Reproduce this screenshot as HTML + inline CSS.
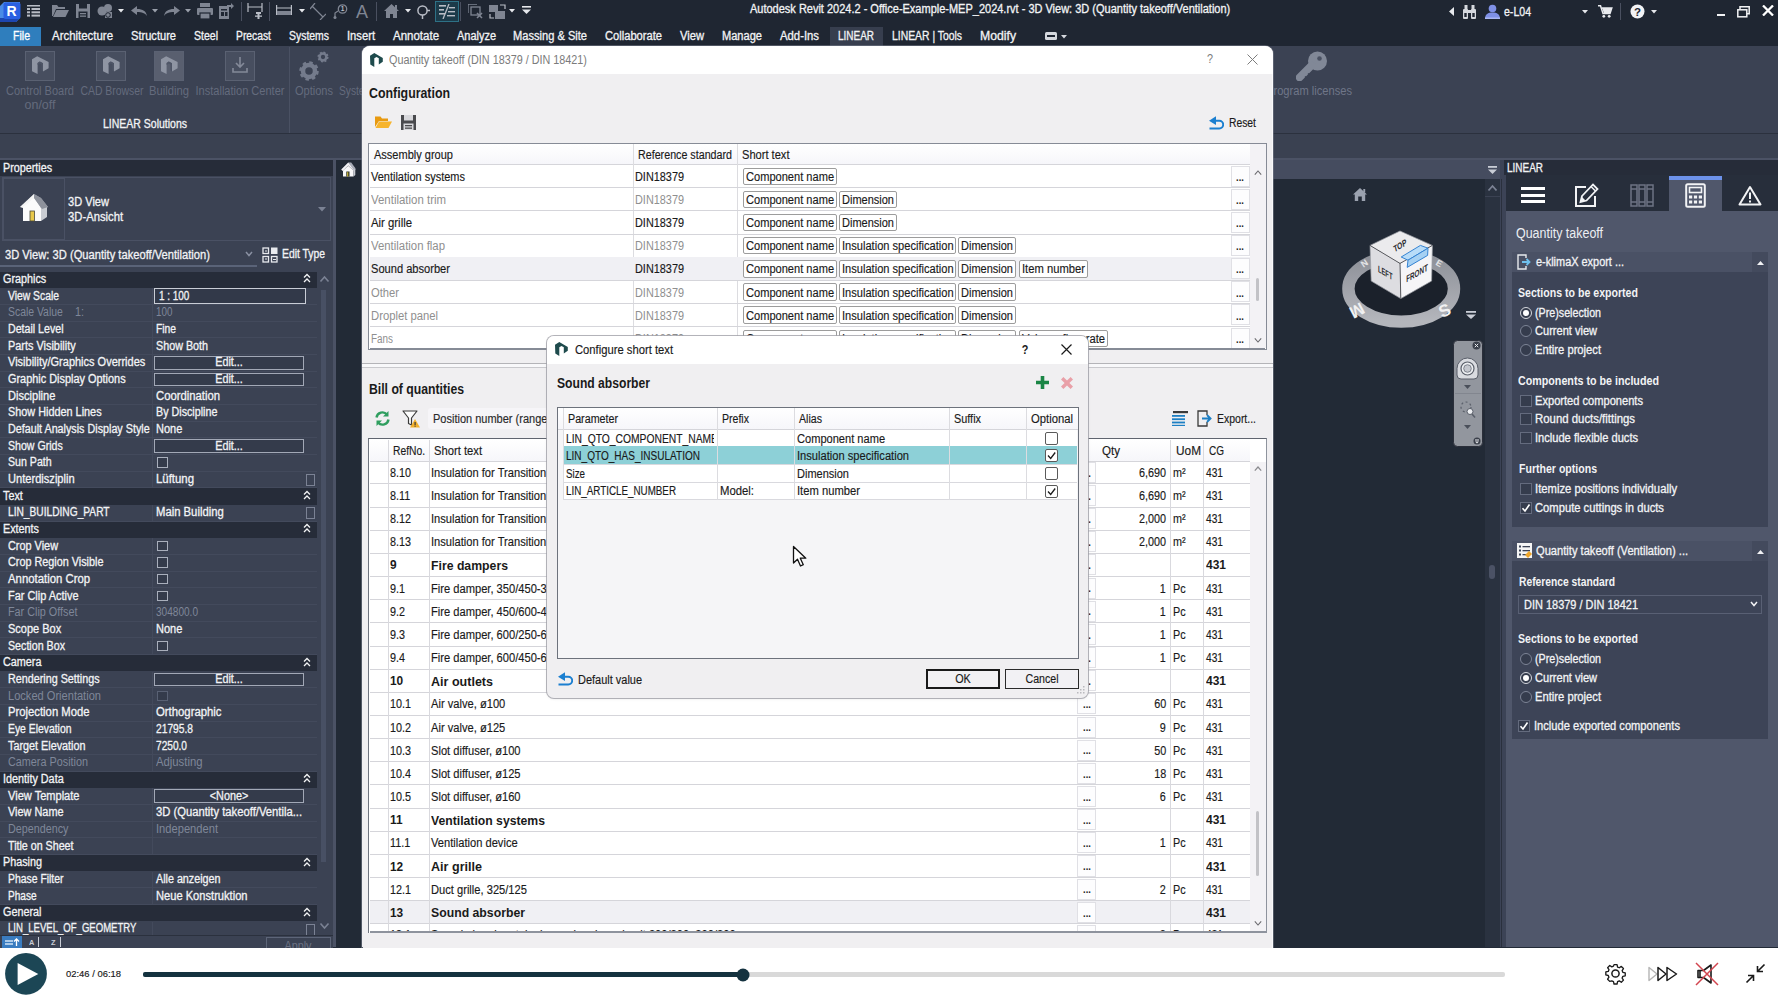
<!DOCTYPE html>
<html><head><meta charset="utf-8"><title>Revit - Quantity takeoff</title>
<style>
html,body{margin:0;padding:0;background:#222a37;}
body{width:1778px;height:1000px;overflow:hidden;position:relative;font-family:"Liberation Sans",sans-serif;}
.b{position:absolute;display:block;}
.t{position:absolute;white-space:nowrap;display:block;}
</style></head><body>
<div class="b" style="left:0px;top:0px;width:1778px;height:46px;background:#1f2632;"></div>
<div class="b" style="left:0px;top:45.5px;width:1778px;height:88.5px;background:#3b4253;"></div>
<div class="b" style="left:0px;top:133px;width:1778px;height:1px;background:#2b313e;"></div>
<div class="b" style="left:0px;top:134px;width:1778px;height:24px;background:#3a4151;"></div>
<div class="b" style="left:0px;top:158px;width:1778px;height:2px;background:#4b5265;"></div>
<svg class="b" style="left:0px;top:1px;" width="22" height="22" viewBox="0 0 22 22"><path d="M0 5 4 1H20V17l-4 4H0Z" fill="#4a8be6"/><path d="M0 17h16l4-4v4l-4 4H0Z" fill="#1d46b0"/><rect x="3.500" y="1.500" width="17" height="16.500" rx="2" fill="#2a60e2"/><text x="11.5" y="15" font-family="Liberation Sans" font-weight="bold" font-size="14" fill="#fff" text-anchor="middle">R</text></svg>
<svg class="b" style="left:27px;top:4px;" width="14" height="14" viewBox="0 0 14 14"><g fill="#b9bdc6"><rect x="0" y="1" width="13" height="1.5"/><rect x="0" y="4" width="3" height="2"/><rect x="4.5" y="4" width="8.5" height="2"/><rect x="0" y="7.3" width="3" height="2"/><rect x="4.5" y="7.3" width="8.5" height="2"/><rect x="0" y="10.6" width="3" height="2"/><rect x="4.5" y="10.6" width="8.5" height="2"/></g></svg>
<svg class="b" style="left:52px;top:4px;" width="17" height="14" viewBox="0 0 17 14"><path d="M0 1h5l1.5 2H13v2H4L1 12H0Z" fill="#7f8592"/><path d="M4.5 6H17l-3.5 7H1Z" fill="#7f8592"/></svg>
<svg class="b" style="left:76px;top:4px;" width="14" height="14" viewBox="0 0 14 14"><path d="M0 0h14v14H0Z" fill="#7f8592"/><rect x="3" y="0" width="8" height="4.5" fill="#1f2632"/><rect x="2.5" y="7.5" width="9" height="6.5" fill="#1f2632"/><rect x="4" y="9" width="6" height="1.3" fill="#7f8592"/><rect x="4" y="11.5" width="6" height="1.3" fill="#7f8592"/></svg>
<svg class="b" style="left:97px;top:3px;" width="17" height="16" viewBox="0 0 17 16"><circle cx="5" cy="8" r="4.5" fill="#7f8592"/><circle cx="11" cy="5" r="4" fill="#7f8592"/><path d="M8 9h7v6H8Z" fill="#7f8592"/><circle cx="11" cy="12" r="2.3" fill="none" stroke="#1f2632" stroke-width="1"/></svg>
<svg class="b" style="left:118px;top:9px;" width="6" height="4" viewBox="0 0 6 4"><path d="M0 0h6L3 3.5Z" fill="#e6e8ec"/></svg>
<svg class="b" style="left:131px;top:6px;" width="16" height="10" viewBox="0 0 16 10"><path d="M0 4.5 6 0v3c6 0 9 2 10 7-2-3-5-4-10-4v3Z" fill="#7f8592"/></svg>
<svg class="b" style="left:152px;top:9px;" width="6" height="4" viewBox="0 0 6 4"><path d="M0 0h6L3 3.5Z" fill="#9aa0ab"/></svg>
<svg class="b" style="left:164px;top:6px;" width="16" height="10" viewBox="0 0 16 10"><path d="M16 4.5 10 0v3C4 3 1 5 0 10c2-3 5-4 10-4v3Z" fill="#7f8592"/></svg>
<svg class="b" style="left:185px;top:9px;" width="6" height="4" viewBox="0 0 6 4"><path d="M0 0h6L3 3.5Z" fill="#9aa0ab"/></svg>
<svg class="b" style="left:197px;top:3px;" width="16" height="16" viewBox="0 0 16 16"><rect x="3" y="0" width="10" height="4" fill="#7f8592"/><rect x="0" y="5" width="16" height="7" rx="1" fill="#7f8592"/><rect x="3" y="10" width="10" height="6" fill="#7f8592" stroke="#1f2632" stroke-width="1.2"/></svg>
<svg class="b" style="left:219px;top:3px;" width="15" height="16" viewBox="0 0 15 16"><path d="M0 3h10v13H0Z" fill="#7f8592"/><rect x="2" y="6" width="6" height="1.5" fill="#1f2632"/><rect x="2" y="9" width="3" height="4" fill="#1f2632"/><rect x="6" y="9" width="2.5" height="4" fill="#1f2632"/><path d="M8 2h4V0l3 3-3 3V4H8Z" fill="#7f8592"/></svg>
<div class="b" style="left:241px;top:2px;width:1px;height:19px;background:#4a5060;"></div>
<svg class="b" style="left:247px;top:3px;" width="17" height="17" viewBox="0 0 17 17"><g stroke="#b9bdc6" stroke-width="1.2" fill="none"><path d="M1 0v9M15 0v9M1 4h14"/></g><path d="M9 9h5v2h-1.5v5h-2v-5H9Z" fill="#b9bdc6"/><rect x="8" y="12.5" width="7" height="1.3" fill="#b9bdc6"/></svg>
<div class="b" style="left:269px;top:2px;width:1px;height:19px;background:#4a5060;"></div>
<svg class="b" style="left:276px;top:5px;" width="16" height="12" viewBox="0 0 16 12"><g stroke="#b9bdc6" stroke-width="1.2" fill="none"><path d="M.6 0v10M15.4 0v10M1 3h14"/></g><rect x="1" y="6" width="14" height="4" fill="#7f8592"/></svg>
<svg class="b" style="left:299px;top:9px;" width="6" height="4" viewBox="0 0 6 4"><path d="M0 0h6L3 3.5Z" fill="#e6e8ec"/></svg>
<svg class="b" style="left:310px;top:3px;" width="16" height="17" viewBox="0 0 16 17"><g stroke="#7f8592" stroke-width="1.2" fill="none"><path d="M2 3 13 14M0 6 5 0M10 17 16 11"/></g></svg>
<svg class="b" style="left:333px;top:4px;" width="15" height="15" viewBox="0 0 15 15"><circle cx="9.5" cy="5" r="4.2" fill="none" stroke="#7f8592" stroke-width="1.3"/><text x="9.5" y="7.4" font-size="6.5" font-family="Liberation Sans" font-weight="bold" fill="#b9bdc6" text-anchor="middle">1</text><path d="M5 7 2 9v4" stroke="#7f8592" stroke-width="1.2" fill="none"/><circle cx="2" cy="13.5" r="1.5" fill="#7f8592"/></svg>
<span class="t" style="left:62px;width:600px;text-align:center;transform-origin:50% 50%;top:-1.0px;font-size:19px;line-height:25px;color:#7f8592;transform:scaleX(0.950);">A</span>
<div class="b" style="left:376px;top:2px;width:1px;height:19px;background:#4a5060;"></div>
<svg class="b" style="left:384px;top:4px;" width="15" height="14" viewBox="0 0 15 14"><path d="M7.5 0 15 7h-2v7H9v-4H6v4H2V7H0Z" fill="#7f8592"/><rect x="11" y="1" width="2" height="4" fill="#7f8592"/></svg>
<svg class="b" style="left:405px;top:9px;" width="6" height="4" viewBox="0 0 6 4"><path d="M0 0h6L3 3.5Z" fill="#e6e8ec"/></svg>
<svg class="b" style="left:416px;top:4px;" width="14" height="15" viewBox="0 0 14 15"><circle cx="6.5" cy="6.5" r="4.6" fill="none" stroke="#b9bdc6" stroke-width="1.5"/><path d="M6.5 11v4M11 6.5h3" stroke="#b9bdc6" stroke-width="1.5"/></svg>
<div class="b" style="left:435px;top:1px;width:24px;height:21px;background:#1c3a49;border:1px solid #2e7186;box-sizing:border-box;"></div>
<svg class="b" style="left:438px;top:4px;" width="18" height="15" viewBox="0 0 18 15"><g fill="#b9bdc6"><rect x="1" y="1" width="7" height="1.6"/><rect x="1" y="5" width="5" height="1.6"/><rect x="1" y="9" width="6" height="1.6"/><rect x="11" y="3" width="6" height="1.4"/><rect x="10" y="7" width="7" height="1.4"/><rect x="9" y="11" width="8" height="1.4"/></g><path d="M11 0 5 15" stroke="#b9bdc6" stroke-width="1.3"/></svg>
<div class="b" style="left:460px;top:2px;width:1px;height:19px;background:#4a5060;"></div>
<svg class="b" style="left:468px;top:4px;" width="16" height="15" viewBox="0 0 16 15"><path d="M0 0h9M0 0v9" stroke="#7f8592" stroke-width="1.3" fill="none"/><rect x="3" y="3" width="9" height="8" fill="none" stroke="#7f8592" stroke-width="1.3"/><path d="M9 9l5 5M14 9l-5 5" stroke="#7f8592" stroke-width="1.6"/></svg>
<svg class="b" style="left:489px;top:4px;" width="18" height="15" viewBox="0 0 18 15"><rect x="0" y="1" width="9" height="7" fill="#7f8592"/><rect x="6" y="7" width="10" height="8" fill="#7f8592"/><path d="M11 1h5v4M1 10v4h4" stroke="#b9bdc6" stroke-width="1.2" fill="none"/></svg>
<svg class="b" style="left:509px;top:9px;" width="6" height="4" viewBox="0 0 6 4"><path d="M0 0h6L3 3.5Z" fill="#e6e8ec"/></svg>
<svg class="b" style="left:522px;top:6px;" width="9" height="9" viewBox="0 0 9 9"><rect x="0" y="0" width="9" height="1.6" fill="#e6e8ec"/><path d="M0 3.5h9L4.5 8Z" fill="#e6e8ec"/></svg>
<span class="t" style="left:750px;transform-origin:0 50%;top:1.0px;font-size:12px;line-height:16px;color:#f2f3f5;-webkit-text-stroke:0.3px #f2f3f5;transform:scaleX(0.916);">Autodesk Revit 2024.2 - Office-Example-MEP_2024.rvt - 3D View: 3D (Quantity takeoff/Ventilation)</span>
<svg class="b" style="left:1449px;top:7px;" width="5" height="9" viewBox="0 0 5 9"><path d="M5 0v9L0 4.5Z" fill="#e8eaee"/></svg>
<svg class="b" style="left:1462px;top:5px;" width="15" height="14" viewBox="0 0 15 14"><g fill="#d5d8de"><rect x="1" y="4" width="5" height="10" rx="1"/><rect x="9" y="4" width="5" height="10" rx="1"/><rect x="2.5" y="0" width="3" height="5"/><rect x="9.500" y="0" width="3" height="5"/><rect x="6" y="5" width="3" height="3"/></g><rect x="2.300" y="8" width="2.400" height="4" fill="#1f2632"/><rect x="10.3" y="8" width="2.400" height="4" fill="#1f2632"/></svg>
<svg class="b" style="left:1485px;top:4px;" width="15" height="15" viewBox="0 0 15 15"><circle cx="7.5" cy="4.5" r="3.8" fill="#7f90e6"/><path d="M0 15c0-5 3-6.500 7.500-6.500S15 10 15 15Z" fill="#7f90e6"/><rect x="0" y="13.5" width="15" height="1.5" fill="#aab6f2"/></svg>
<span class="t" style="left:1504px;transform-origin:0 50%;top:3.5px;font-size:12px;line-height:16px;color:#f2f3f5;-webkit-text-stroke:0.3px #f2f3f5;transform:scaleX(0.880);">e-L04</span>
<svg class="b" style="left:1582px;top:10px;" width="6" height="4" viewBox="0 0 6 4"><path d="M0 0h6L3 3.5Z" fill="#e6e8ec"/></svg>
<svg class="b" style="left:1598px;top:5px;" width="15" height="13" viewBox="0 0 15 13"><path d="M0 .7h2.500l2.500 7.800h7l1.800-5.500H4" stroke="#e8eaee" stroke-width="1.500" fill="none"/><path d="M4.200 3h9.500l-1.800 5.500h-6Z" fill="#e8eaee"/><circle cx="5.800" cy="11.300" r="1.400" fill="#e8eaee"/><circle cx="11.200" cy="11.300" r="1.400" fill="#e8eaee"/></svg>
<div class="b" style="left:1620px;top:3px;width:1px;height:17px;background:#4a5060;"></div>
<svg class="b" style="left:1630px;top:4px;" width="15" height="15" viewBox="0 0 15 15"><circle cx="7.500" cy="7.500" r="7" fill="#f2f3f5"/><text x="7.500" y="11.800" font-size="11.500" font-weight="bold" font-family="Liberation Sans" fill="#1f2632" text-anchor="middle">?</text></svg>
<svg class="b" style="left:1651px;top:10px;" width="6" height="4" viewBox="0 0 6 4"><path d="M0 0h6L3 3.5Z" fill="#e6e8ec"/></svg>
<div class="b" style="left:1717px;top:14px;width:8px;height:2px;background:#f2f3f5;"></div>
<svg class="b" style="left:1737px;top:6px;" width="13" height="12" viewBox="0 0 13 12"><path d="M3 3V.8h9.200v7H10" stroke="#f2f3f5" stroke-width="1.500" fill="none"/><rect x=".8" y="3.800" width="9" height="7" stroke="#f2f3f5" stroke-width="1.500" fill="none"/></svg>
<svg class="b" style="left:1762px;top:5px;" width="12" height="11" viewBox="0 0 12 11"><path d="M1 .5 11 10.500M11 .5 1 10.500" stroke="#fff" stroke-width="2.300"/></svg>
<div class="b" style="left:0px;top:27px;width:41px;height:19px;background:#2f7ebd;"></div>
<span class="t" style="left:13px;transform-origin:0 50%;top:28.0px;font-size:12px;line-height:16px;color:#fff;-webkit-text-stroke:0.3px #fff;transform:scaleX(0.879);">File</span>
<span class="t" style="left:52px;transform-origin:0 50%;top:28.0px;font-size:12px;line-height:16px;color:#f2f3f5;-webkit-text-stroke:0.3px #f2f3f5;transform:scaleX(0.953);">Architecture</span>
<span class="t" style="left:131px;transform-origin:0 50%;top:28.0px;font-size:12px;line-height:16px;color:#f2f3f5;-webkit-text-stroke:0.3px #f2f3f5;transform:scaleX(0.924);">Structure</span>
<span class="t" style="left:194px;transform-origin:0 50%;top:28.0px;font-size:12px;line-height:16px;color:#f2f3f5;-webkit-text-stroke:0.3px #f2f3f5;transform:scaleX(0.877);">Steel</span>
<span class="t" style="left:236px;transform-origin:0 50%;top:28.0px;font-size:12px;line-height:16px;color:#f2f3f5;-webkit-text-stroke:0.3px #f2f3f5;transform:scaleX(0.860);">Precast</span>
<span class="t" style="left:289px;transform-origin:0 50%;top:28.0px;font-size:12px;line-height:16px;color:#f2f3f5;-webkit-text-stroke:0.3px #f2f3f5;transform:scaleX(0.869);">Systems</span>
<span class="t" style="left:347px;transform-origin:0 50%;top:28.0px;font-size:12px;line-height:16px;color:#f2f3f5;-webkit-text-stroke:0.3px #f2f3f5;transform:scaleX(0.933);">Insert</span>
<span class="t" style="left:393px;transform-origin:0 50%;top:28.0px;font-size:12px;line-height:16px;color:#f2f3f5;-webkit-text-stroke:0.3px #f2f3f5;transform:scaleX(0.958);">Annotate</span>
<span class="t" style="left:457px;transform-origin:0 50%;top:28.0px;font-size:12px;line-height:16px;color:#f2f3f5;-webkit-text-stroke:0.3px #f2f3f5;transform:scaleX(0.914);">Analyze</span>
<span class="t" style="left:513px;transform-origin:0 50%;top:28.0px;font-size:12px;line-height:16px;color:#f2f3f5;-webkit-text-stroke:0.3px #f2f3f5;transform:scaleX(0.925);">Massing &amp; Site</span>
<span class="t" style="left:605px;transform-origin:0 50%;top:28.0px;font-size:12px;line-height:16px;color:#f2f3f5;-webkit-text-stroke:0.3px #f2f3f5;transform:scaleX(0.929);">Collaborate</span>
<span class="t" style="left:680px;transform-origin:0 50%;top:28.0px;font-size:12px;line-height:16px;color:#f2f3f5;-webkit-text-stroke:0.3px #f2f3f5;transform:scaleX(0.931);">View</span>
<span class="t" style="left:722px;transform-origin:0 50%;top:28.0px;font-size:12px;line-height:16px;color:#f2f3f5;-webkit-text-stroke:0.3px #f2f3f5;transform:scaleX(0.922);">Manage</span>
<span class="t" style="left:780px;transform-origin:0 50%;top:28.0px;font-size:12px;line-height:16px;color:#f2f3f5;-webkit-text-stroke:0.3px #f2f3f5;transform:scaleX(0.943);">Add-Ins</span>
<div class="b" style="left:830px;top:26.5px;width:52.5px;height:19.5px;background:#373e4e;"></div>
<span class="t" style="left:838px;transform-origin:0 50%;top:28.0px;font-size:12px;line-height:16px;color:#f2f3f5;-webkit-text-stroke:0.3px #f2f3f5;transform:scaleX(0.830);">LINEAR</span>
<span class="t" style="left:892px;transform-origin:0 50%;top:28.0px;font-size:12px;line-height:16px;color:#f2f3f5;-webkit-text-stroke:0.3px #f2f3f5;transform:scaleX(0.865);">LINEAR | Tools</span>
<span class="t" style="left:980px;transform-origin:0 50%;top:28.0px;font-size:12px;line-height:16px;color:#f2f3f5;-webkit-text-stroke:0.3px #f2f3f5;transform:scaleX(1.019);">Modify</span>
<svg class="b" style="left:1045px;top:32px;" width="12" height="8" viewBox="0 0 12 8"><rect x="0" y="0" width="12" height="8" rx="1.500" fill="#d5d8de"/><rect x="2" y="3" width="8" height="2" fill="#1f2632"/></svg>
<svg class="b" style="left:1061px;top:34.5px;" width="6" height="4" viewBox="0 0 6 4"><path d="M0 0h6L3 3.5Z" fill="#d5d8de"/></svg>
<div class="b" style="left:25px;top:51px;width:30px;height:30px;background:#474e5f;border:1px solid #5a6172;box-sizing:border-box;"></div>
<div class="b" style="left:96px;top:51px;width:30px;height:30px;background:#474e5f;border:1px solid #5a6172;box-sizing:border-box;"></div>
<div class="b" style="left:154px;top:51px;width:30px;height:30px;background:#595f6f;border:1px solid #5a6172;box-sizing:border-box;"></div>
<div class="b" style="left:225px;top:51px;width:30px;height:30px;background:#474e5f;border:1px solid #5a6172;box-sizing:border-box;"></div>
<svg class="b" style="left:31.5px;top:56.4px;" width="17" height="18" viewBox="0 0 17 18"><path d="M0 3.200 5.200 .3 16.600 6v6.200L11 15.400V7.200L7.800 5.400 5.600 7v11L0 15.300Z" fill="#8f95a3"/><path d="M5.600 7 7.800 5.400 11 7.200v8.200L9.500 14.500V8.500L7.800 7.600 5.600 9Z" fill="#4e5566"/></svg>
<svg class="b" style="left:102.5px;top:56.4px;" width="17" height="18" viewBox="0 0 17 18"><path d="M0 3.200 5.200 .3 16.600 6v6.200L11 15.400V7.200L7.800 5.400 5.600 7v11L0 15.300Z" fill="#8f95a3"/><path d="M5.600 7 7.800 5.400 11 7.200v8.200L9.500 14.500V8.500L7.800 7.600 5.600 9Z" fill="#4e5566"/></svg>
<svg class="b" style="left:160.5px;top:56.4px;" width="17" height="18" viewBox="0 0 17 18"><path d="M0 3.200 5.200 .3 16.600 6v6.200L11 15.400V7.200L7.800 5.400 5.600 7v11L0 15.300Z" fill="#8f95a3"/><path d="M5.600 7 7.800 5.400 11 7.200v8.200L9.500 14.500V8.500L7.800 7.600 5.600 9Z" fill="#4e5566"/></svg>
<svg class="b" style="left:232px;top:57px;" width="16" height="18" viewBox="0 0 16 18"><path d="M8 0v9M4 6l4 4 4-4" stroke="#848a99" stroke-width="1.600" fill="none"/><path d="M1 11v4h14v-4" stroke="#848a99" stroke-width="1.600" fill="none"/></svg>
<span class="t" style="left:-260px;width:600px;text-align:center;transform-origin:50% 50%;top:83.0px;font-size:12px;line-height:16px;color:#646b7d;transform:scaleX(0.918);">Control Board</span>
<span class="t" style="left:-260px;width:600px;text-align:center;transform-origin:50% 50%;top:96.7px;font-size:12px;line-height:16px;color:#646b7d;transform:scaleX(1.040);">on/off</span>
<span class="t" style="left:-188.5px;width:600px;text-align:center;transform-origin:50% 50%;top:83.0px;font-size:12px;line-height:16px;color:#646b7d;transform:scaleX(0.867);">CAD Browser</span>
<span class="t" style="left:-131px;width:600px;text-align:center;transform-origin:50% 50%;top:83.0px;font-size:12px;line-height:16px;color:#646b7d;transform:scaleX(0.937);">Building</span>
<span class="t" style="left:-60.5px;width:600px;text-align:center;transform-origin:50% 50%;top:83.0px;font-size:12px;line-height:16px;color:#646b7d;transform:scaleX(0.920);">Installation Center</span>
<span class="t" style="left:-155px;width:600px;text-align:center;transform-origin:50% 50%;top:116.0px;font-size:12px;line-height:16px;color:#f2f3f5;-webkit-text-stroke:0.3px #f2f3f5;transform:scaleX(0.875);">LINEAR Solutions</span>
<div class="b" style="left:289px;top:47px;width:1px;height:86px;background:#4a5163;"></div>
<svg class="b" style="left:297px;top:50px;" width="34" height="32" viewBox="0 0 34 32"><circle cx="12" cy="21" r="6" fill="none" stroke="#747b8c" stroke-width="4.5"/><circle cx="12" cy="21" r="8.1" fill="none" stroke="#747b8c" stroke-width="3.3" stroke-dasharray="3.30 3.06"/><circle cx="26" cy="7" r="3.4" fill="none" stroke="#747b8c" stroke-width="2.5"/><circle cx="26" cy="7" r="4.6" fill="none" stroke="#747b8c" stroke-width="1.9" stroke-dasharray="1.87 1.73"/></svg>
<span class="t" style="left:14px;width:600px;text-align:center;transform-origin:50% 50%;top:83.0px;font-size:12px;line-height:16px;color:#646b7d;transform:scaleX(0.919);">Options</span>
<span class="t" style="left:339px;transform-origin:0 50%;top:83.0px;font-size:12px;line-height:16px;color:#646b7d;transform:scaleX(0.850);">System</span>
<svg class="b" style="left:1295.5px;top:51px;" width="31" height="30" viewBox="0 0 31 30"><circle cx="21.500" cy="10" r="9.500" fill="#818897"/><path d="M15.500 14.500 3.500 26.500" stroke="#818897" stroke-width="7.500" stroke-linecap="round"/><path d="M9 25.500l2 2M12 22.500l2 2" stroke="#3b4253" stroke-width="1.300"/><circle cx="23.500" cy="7.500" r="2.300" fill="#4a5162"/></svg>
<span class="t" style="left:1266px;transform-origin:0 50%;top:83.0px;font-size:12px;line-height:16px;color:#6f7688;transform:scaleX(0.928);">Program licenses</span>
<div class="b" style="left:0px;top:160px;width:333px;height:787px;background:#3b4253;"></div>
<div class="b" style="left:333px;top:160px;width:3px;height:787px;background:#4b5265;"></div>
<div class="b" style="left:336px;top:160px;width:26px;height:787px;background:#222a36;"></div>
<div class="b" style="left:0px;top:160px;width:333px;height:16px;background:#262c39;"></div>
<span class="t" style="left:3px;transform-origin:0 50%;top:160.0px;font-size:12px;line-height:16px;color:#f2f3f5;-webkit-text-stroke:0.3px #f2f3f5;transform:scaleX(0.896);">Properties</span>
<svg class="b" style="left:341px;top:161.5px;" width="15" height="15" viewBox="0 0 15 15"><path d="M7.200 .5 14.600 7.500 13 9 7.200 3.500 1.600 9 .2 7.500Z" fill="#f4f4f6"/><path d="M7.200 .5l3 0 4.400 6-1.600 2Z" fill="#a9adb8"/><path d="M2 8.500 7.200 3.800 12.500 8.500V14.500H2Z" fill="#f8f8fa"/><path d="M12.500 8.500l1.800-1V13l-1.800 1.500Z" fill="#c9ccd4"/><rect x="5.300" y="9.500" width="3.200" height="5" fill="#2a2e1f"/><rect x="6" y="10.200" width="1.300" height="4.300" fill="#b9a83a"/></svg>
<div class="b" style="left:2px;top:177px;width:329px;height:64px;border:1px solid #4a5164;box-sizing:border-box;"></div>
<div class="b" style="left:3px;top:178px;width:62px;height:62px;border:1px solid #4a5164;box-sizing:border-box;"></div>
<svg class="b" style="left:19px;top:193px;" width="30" height="30" viewBox="0 0 30 30"><path d="M1 14 15 1l7 4 7 9-6 3Z" fill="#9a9ea8"/><path d="M15 1 1 14l3 1L15 5Z" fill="#f4f4f4"/><path d="M4 14 15 4.500 22 15v13H4Z" fill="#fbfbfb"/><path d="M22 15l6-2v11l-6 4Z" fill="#c9ccd2"/><path d="M15 1l7 4 7 9-6 2L15 5Z" fill="#8e929c"/><rect x="11" y="18" width="4.500" height="10" fill="#e8c84a" stroke="#4a4a3a" stroke-width=".8"/></svg>
<span class="t" style="left:68px;transform-origin:0 50%;top:194.0px;font-size:12.5px;line-height:16px;color:#f2f3f5;-webkit-text-stroke:0.3px #f2f3f5;transform:scaleX(0.885);">3D View</span>
<span class="t" style="left:68px;transform-origin:0 50%;top:209.0px;font-size:12.5px;line-height:16px;color:#f2f3f5;-webkit-text-stroke:0.3px #f2f3f5;transform:scaleX(0.900);">3D-Ansicht</span>
<svg class="b" style="left:318px;top:207px;" width="8" height="5" viewBox="0 0 8 5"><path d="M0 0h8L4 4.500Z" fill="#7b8294"/></svg>
<span class="t" style="left:5px;transform-origin:0 50%;top:246.5px;font-size:12.5px;line-height:16px;color:#f2f3f5;-webkit-text-stroke:0.3px #f2f3f5;transform:scaleX(0.893);">3D View: 3D (Quantity takeoff/Ventilation)</span>
<svg class="b" style="left:245px;top:251px;" width="8" height="6" viewBox="0 0 8 6"><path d="M1 1l3 3.500L7 1" stroke="#8a91a3" stroke-width="1.500" fill="none"/></svg>
<div class="b" style="left:0px;top:265px;width:257px;height:2px;background:#5a6378;"></div>
<svg class="b" style="left:262px;top:247px;" width="16" height="16" viewBox="0 0 16 16"><g fill="none" stroke="#e8eaee" stroke-width="1.300"><rect x="1" y="1" width="5.500" height="5.500"/><rect x="1" y="9.500" width="5.500" height="5.500"/><rect x="9.500" y="9.500" width="5.500" height="5.500"/></g><rect x="9" y=".5" width="6.500" height="6.500" fill="#e8eaee"/><path d="M3 4h2M3 12h2M11 12.500h3" stroke="#e8eaee" stroke-width="1.200"/></svg>
<span class="t" style="left:282px;transform-origin:0 50%;top:246.0px;font-size:12px;line-height:16px;color:#f2f3f5;-webkit-text-stroke:0.3px #f2f3f5;transform:scaleX(0.863);">Edit Type</span>
<svg class="b" style="left:319px;top:275px;" width="11" height="8" viewBox="0 0 11 8"><path d="M1.500 6.500 5.500 2l4 4.500" stroke="#7b8294" stroke-width="1.600" fill="none"/></svg>
<div class="b" style="left:321px;top:290px;width:5px;height:572px;background:#485064;"></div>
<svg class="b" style="left:319px;top:922px;" width="11" height="8" viewBox="0 0 11 8"><path d="M1.500 1.500 5.500 6l4-4.500" stroke="#7b8294" stroke-width="1.600" fill="none"/></svg>
<div class="b" style="left:0px;top:271.5px;width:317px;height:16.7px;background:#262c39;"></div>
<span class="t" style="left:3px;transform-origin:0 50%;top:270.8px;font-size:12px;line-height:16px;color:#f2f3f5;-webkit-text-stroke:0.3px #f2f3f5;transform:scaleX(0.900);">Graphics</span>
<svg class="b" style="left:303px;top:273.3px;" width="8" height="11" viewBox="0 0 8 11"><path d="M1 4.500 4 1.500l3 3M1 9 4 6l3 3" stroke="#f2f3f5" stroke-width="1.300" fill="none"/></svg>
<div class="b" style="left:0px;top:303.8px;width:317px;height:1px;background:#434a5c;"></div>
<div class="b" style="left:152px;top:288.2px;width:1px;height:16.7px;background:#434a5c;"></div>
<span class="t" style="left:7.8px;transform-origin:0 50%;top:287.5px;font-size:12px;line-height:16px;color:#f2f3f5;-webkit-text-stroke:0.3px #f2f3f5;transform:scaleX(0.862);">View Scale</span>
<div class="b" style="left:153.5px;top:287.9px;width:152px;height:16px;background:#323949;border:1px solid #c9cdd6;box-sizing:border-box;"></div>
<span class="t" style="left:159px;transform-origin:0 50%;top:287.5px;font-size:12px;line-height:16px;color:#f2f3f5;-webkit-text-stroke:0.3px #f2f3f5;transform:scaleX(0.828);">1 : 100</span>
<div class="b" style="left:0px;top:320.5px;width:317px;height:1px;background:#434a5c;"></div>
<div class="b" style="left:152px;top:304.8px;width:1px;height:16.7px;background:#434a5c;"></div>
<span class="t" style="left:7.8px;transform-origin:0 50%;top:304.2px;font-size:12px;line-height:16px;color:#7f8799;transform:scaleX(0.868);">Scale Value</span>
<span class="t" style="left:75px;transform-origin:0 50%;top:304.2px;font-size:12px;line-height:16px;color:#7f8799;transform:scaleX(0.900);">1:</span>
<span class="t" style="left:156px;transform-origin:0 50%;top:304.2px;font-size:12px;line-height:16px;color:#7f8799;transform:scaleX(0.819);">100</span>
<div class="b" style="left:0px;top:337.2px;width:317px;height:1px;background:#434a5c;"></div>
<div class="b" style="left:152px;top:321.5px;width:1px;height:16.7px;background:#434a5c;"></div>
<span class="t" style="left:7.8px;transform-origin:0 50%;top:320.8px;font-size:12px;line-height:16px;color:#f2f3f5;-webkit-text-stroke:0.3px #f2f3f5;transform:scaleX(0.885);">Detail Level</span>
<span class="t" style="left:156px;transform-origin:0 50%;top:320.8px;font-size:12px;line-height:16px;color:#f2f3f5;-webkit-text-stroke:0.3px #f2f3f5;transform:scaleX(0.857);">Fine</span>
<div class="b" style="left:0px;top:353.8px;width:317px;height:1px;background:#434a5c;"></div>
<div class="b" style="left:152px;top:338.2px;width:1px;height:16.7px;background:#434a5c;"></div>
<span class="t" style="left:7.8px;transform-origin:0 50%;top:337.5px;font-size:12px;line-height:16px;color:#f2f3f5;-webkit-text-stroke:0.3px #f2f3f5;transform:scaleX(0.909);">Parts Visibility</span>
<span class="t" style="left:156px;transform-origin:0 50%;top:337.5px;font-size:12px;line-height:16px;color:#f2f3f5;-webkit-text-stroke:0.3px #f2f3f5;transform:scaleX(0.896);">Show Both</span>
<div class="b" style="left:0px;top:370.5px;width:317px;height:1px;background:#434a5c;"></div>
<div class="b" style="left:152px;top:354.8px;width:1px;height:16.7px;background:#434a5c;"></div>
<span class="t" style="left:7.8px;transform-origin:0 50%;top:354.2px;font-size:12px;line-height:16px;color:#f2f3f5;-webkit-text-stroke:0.3px #f2f3f5;transform:scaleX(0.916);">Visibility/Graphics Overrides</span>
<div class="b" style="left:154px;top:356.0px;width:150px;height:13.5px;background:#343b4b;border:1px solid #a2a8b6;box-sizing:border-box;"></div>
<span class="t" style="left:-71px;width:600px;text-align:center;transform-origin:50% 50%;top:354.2px;font-size:12px;line-height:16px;color:#f2f3f5;-webkit-text-stroke:0.3px #f2f3f5;transform:scaleX(0.900);">Edit...</span>
<div class="b" style="left:0px;top:387.2px;width:317px;height:1px;background:#434a5c;"></div>
<div class="b" style="left:152px;top:371.5px;width:1px;height:16.7px;background:#434a5c;"></div>
<span class="t" style="left:7.8px;transform-origin:0 50%;top:370.8px;font-size:12px;line-height:16px;color:#f2f3f5;-webkit-text-stroke:0.3px #f2f3f5;transform:scaleX(0.909);">Graphic Display Options</span>
<div class="b" style="left:154px;top:372.7px;width:150px;height:13.5px;background:#343b4b;border:1px solid #a2a8b6;box-sizing:border-box;"></div>
<span class="t" style="left:-71px;width:600px;text-align:center;transform-origin:50% 50%;top:370.8px;font-size:12px;line-height:16px;color:#f2f3f5;-webkit-text-stroke:0.3px #f2f3f5;transform:scaleX(0.900);">Edit...</span>
<div class="b" style="left:0px;top:403.8px;width:317px;height:1px;background:#434a5c;"></div>
<div class="b" style="left:152px;top:388.2px;width:1px;height:16.7px;background:#434a5c;"></div>
<span class="t" style="left:7.8px;transform-origin:0 50%;top:387.5px;font-size:12px;line-height:16px;color:#f2f3f5;-webkit-text-stroke:0.3px #f2f3f5;transform:scaleX(0.923);">Discipline</span>
<span class="t" style="left:156px;transform-origin:0 50%;top:387.5px;font-size:12px;line-height:16px;color:#f2f3f5;-webkit-text-stroke:0.3px #f2f3f5;transform:scaleX(0.941);">Coordination</span>
<div class="b" style="left:0px;top:420.5px;width:317px;height:1px;background:#434a5c;"></div>
<div class="b" style="left:152px;top:404.8px;width:1px;height:16.7px;background:#434a5c;"></div>
<span class="t" style="left:7.8px;transform-origin:0 50%;top:404.2px;font-size:12px;line-height:16px;color:#f2f3f5;-webkit-text-stroke:0.3px #f2f3f5;transform:scaleX(0.905);">Show Hidden Lines</span>
<span class="t" style="left:156px;transform-origin:0 50%;top:404.2px;font-size:12px;line-height:16px;color:#f2f3f5;-webkit-text-stroke:0.3px #f2f3f5;transform:scaleX(0.894);">By Discipline</span>
<div class="b" style="left:0px;top:437.2px;width:317px;height:1px;background:#434a5c;"></div>
<div class="b" style="left:152px;top:421.5px;width:1px;height:16.7px;background:#434a5c;"></div>
<span class="t" style="left:7.8px;transform-origin:0 50%;top:420.8px;font-size:12px;line-height:16px;color:#f2f3f5;-webkit-text-stroke:0.3px #f2f3f5;transform:scaleX(0.896);">Default Analysis Display Style</span>
<span class="t" style="left:156px;transform-origin:0 50%;top:420.8px;font-size:12px;line-height:16px;color:#f2f3f5;-webkit-text-stroke:0.3px #f2f3f5;transform:scaleX(0.917);">None</span>
<div class="b" style="left:0px;top:453.8px;width:317px;height:1px;background:#434a5c;"></div>
<div class="b" style="left:152px;top:438.2px;width:1px;height:16.7px;background:#434a5c;"></div>
<span class="t" style="left:7.8px;transform-origin:0 50%;top:437.5px;font-size:12px;line-height:16px;color:#f2f3f5;-webkit-text-stroke:0.3px #f2f3f5;transform:scaleX(0.884);">Show Grids</span>
<div class="b" style="left:154px;top:439.4px;width:150px;height:13.5px;background:#343b4b;border:1px solid #a2a8b6;box-sizing:border-box;"></div>
<span class="t" style="left:-71px;width:600px;text-align:center;transform-origin:50% 50%;top:437.5px;font-size:12px;line-height:16px;color:#f2f3f5;-webkit-text-stroke:0.3px #f2f3f5;transform:scaleX(0.900);">Edit...</span>
<div class="b" style="left:0px;top:470.5px;width:317px;height:1px;background:#434a5c;"></div>
<div class="b" style="left:152px;top:454.8px;width:1px;height:16.7px;background:#434a5c;"></div>
<span class="t" style="left:7.8px;transform-origin:0 50%;top:454.2px;font-size:12px;line-height:16px;color:#f2f3f5;-webkit-text-stroke:0.3px #f2f3f5;transform:scaleX(0.885);">Sun Path</span>
<div class="b" style="left:157px;top:457.2px;width:11px;height:10.5px;background:#343b4b;border:1px solid #a9afbc;box-sizing:border-box;"></div>
<div class="b" style="left:0px;top:487.2px;width:317px;height:1px;background:#434a5c;"></div>
<div class="b" style="left:152px;top:471.5px;width:1px;height:16.7px;background:#434a5c;"></div>
<span class="t" style="left:7.8px;transform-origin:0 50%;top:470.8px;font-size:12px;line-height:16px;color:#f2f3f5;-webkit-text-stroke:0.3px #f2f3f5;transform:scaleX(0.925);">Unterdisziplin</span>
<span class="t" style="left:156px;transform-origin:0 50%;top:470.8px;font-size:12px;line-height:16px;color:#f2f3f5;-webkit-text-stroke:0.3px #f2f3f5;transform:scaleX(0.949);">Lüftung</span>
<div class="b" style="left:306px;top:473.5px;width:9px;height:12.5px;border:1px solid #7b8294;box-sizing:border-box;"></div>
<div class="b" style="left:0px;top:488.2px;width:317px;height:16.7px;background:#262c39;"></div>
<span class="t" style="left:3px;transform-origin:0 50%;top:487.5px;font-size:12px;line-height:16px;color:#f2f3f5;-webkit-text-stroke:0.3px #f2f3f5;transform:scaleX(0.900);">Text</span>
<svg class="b" style="left:303px;top:490.0px;" width="8" height="11" viewBox="0 0 8 11"><path d="M1 4.500 4 1.500l3 3M1 9 4 6l3 3" stroke="#f2f3f5" stroke-width="1.300" fill="none"/></svg>
<div class="b" style="left:0px;top:520.5px;width:317px;height:1px;background:#434a5c;"></div>
<div class="b" style="left:152px;top:504.8px;width:1px;height:16.7px;background:#434a5c;"></div>
<span class="t" style="left:7.8px;transform-origin:0 50%;top:504.2px;font-size:12px;line-height:16px;color:#f2f3f5;-webkit-text-stroke:0.3px #f2f3f5;transform:scaleX(0.849);">LIN_BUILDING_PART</span>
<span class="t" style="left:156px;transform-origin:0 50%;top:504.2px;font-size:12px;line-height:16px;color:#f2f3f5;-webkit-text-stroke:0.3px #f2f3f5;transform:scaleX(0.940);">Main Building</span>
<div class="b" style="left:306px;top:506.8px;width:9px;height:12.5px;border:1px solid #7b8294;box-sizing:border-box;"></div>
<div class="b" style="left:0px;top:521.5px;width:317px;height:16.7px;background:#262c39;"></div>
<span class="t" style="left:3px;transform-origin:0 50%;top:520.8px;font-size:12px;line-height:16px;color:#f2f3f5;-webkit-text-stroke:0.3px #f2f3f5;transform:scaleX(0.900);">Extents</span>
<svg class="b" style="left:303px;top:523.3px;" width="8" height="11" viewBox="0 0 8 11"><path d="M1 4.500 4 1.500l3 3M1 9 4 6l3 3" stroke="#f2f3f5" stroke-width="1.300" fill="none"/></svg>
<div class="b" style="left:0px;top:553.8px;width:317px;height:1px;background:#434a5c;"></div>
<div class="b" style="left:152px;top:538.2px;width:1px;height:16.7px;background:#434a5c;"></div>
<span class="t" style="left:7.8px;transform-origin:0 50%;top:537.5px;font-size:12px;line-height:16px;color:#f2f3f5;-webkit-text-stroke:0.3px #f2f3f5;transform:scaleX(0.907);">Crop View</span>
<div class="b" style="left:157px;top:540.5px;width:11px;height:10.5px;background:#343b4b;border:1px solid #a9afbc;box-sizing:border-box;"></div>
<div class="b" style="left:0px;top:570.5px;width:317px;height:1px;background:#434a5c;"></div>
<div class="b" style="left:152px;top:554.8px;width:1px;height:16.7px;background:#434a5c;"></div>
<span class="t" style="left:7.8px;transform-origin:0 50%;top:554.2px;font-size:12px;line-height:16px;color:#f2f3f5;-webkit-text-stroke:0.3px #f2f3f5;transform:scaleX(0.902);">Crop Region Visible</span>
<div class="b" style="left:157px;top:557.2px;width:11px;height:10.5px;background:#343b4b;border:1px solid #a9afbc;box-sizing:border-box;"></div>
<div class="b" style="left:0px;top:587.2px;width:317px;height:1px;background:#434a5c;"></div>
<div class="b" style="left:152px;top:571.5px;width:1px;height:16.7px;background:#434a5c;"></div>
<span class="t" style="left:7.8px;transform-origin:0 50%;top:570.8px;font-size:12px;line-height:16px;color:#f2f3f5;-webkit-text-stroke:0.3px #f2f3f5;transform:scaleX(0.946);">Annotation Crop</span>
<div class="b" style="left:157px;top:573.8px;width:11px;height:10.5px;background:#343b4b;border:1px solid #a9afbc;box-sizing:border-box;"></div>
<div class="b" style="left:0px;top:603.8px;width:317px;height:1px;background:#434a5c;"></div>
<div class="b" style="left:152px;top:588.2px;width:1px;height:16.7px;background:#434a5c;"></div>
<span class="t" style="left:7.8px;transform-origin:0 50%;top:587.5px;font-size:12px;line-height:16px;color:#f2f3f5;-webkit-text-stroke:0.3px #f2f3f5;transform:scaleX(0.911);">Far Clip Active</span>
<div class="b" style="left:157px;top:590.5px;width:11px;height:10.5px;background:#343b4b;border:1px solid #a9afbc;box-sizing:border-box;"></div>
<div class="b" style="left:0px;top:620.5px;width:317px;height:1px;background:#434a5c;"></div>
<div class="b" style="left:152px;top:604.8px;width:1px;height:16.7px;background:#434a5c;"></div>
<span class="t" style="left:7.8px;transform-origin:0 50%;top:604.2px;font-size:12px;line-height:16px;color:#7f8799;transform:scaleX(0.901);">Far Clip Offset</span>
<span class="t" style="left:156px;transform-origin:0 50%;top:604.2px;font-size:12px;line-height:16px;color:#7f8799;transform:scaleX(0.839);">304800.0</span>
<div class="b" style="left:0px;top:637.2px;width:317px;height:1px;background:#434a5c;"></div>
<div class="b" style="left:152px;top:621.5px;width:1px;height:16.7px;background:#434a5c;"></div>
<span class="t" style="left:7.8px;transform-origin:0 50%;top:620.8px;font-size:12px;line-height:16px;color:#f2f3f5;-webkit-text-stroke:0.3px #f2f3f5;transform:scaleX(0.917);">Scope Box</span>
<span class="t" style="left:156px;transform-origin:0 50%;top:620.8px;font-size:12px;line-height:16px;color:#f2f3f5;-webkit-text-stroke:0.3px #f2f3f5;transform:scaleX(0.917);">None</span>
<div class="b" style="left:0px;top:653.8px;width:317px;height:1px;background:#434a5c;"></div>
<div class="b" style="left:152px;top:638.2px;width:1px;height:16.7px;background:#434a5c;"></div>
<span class="t" style="left:7.8px;transform-origin:0 50%;top:637.5px;font-size:12px;line-height:16px;color:#f2f3f5;-webkit-text-stroke:0.3px #f2f3f5;transform:scaleX(0.890);">Section Box</span>
<div class="b" style="left:157px;top:640.5px;width:11px;height:10.5px;background:#343b4b;border:1px solid #a9afbc;box-sizing:border-box;"></div>
<div class="b" style="left:0px;top:654.8px;width:317px;height:16.7px;background:#262c39;"></div>
<span class="t" style="left:3px;transform-origin:0 50%;top:654.2px;font-size:12px;line-height:16px;color:#f2f3f5;-webkit-text-stroke:0.3px #f2f3f5;transform:scaleX(0.900);">Camera</span>
<svg class="b" style="left:303px;top:656.7px;" width="8" height="11" viewBox="0 0 8 11"><path d="M1 4.500 4 1.500l3 3M1 9 4 6l3 3" stroke="#f2f3f5" stroke-width="1.300" fill="none"/></svg>
<div class="b" style="left:0px;top:687.2px;width:317px;height:1px;background:#434a5c;"></div>
<div class="b" style="left:152px;top:671.5px;width:1px;height:16.7px;background:#434a5c;"></div>
<span class="t" style="left:7.8px;transform-origin:0 50%;top:670.8px;font-size:12px;line-height:16px;color:#f2f3f5;-webkit-text-stroke:0.3px #f2f3f5;transform:scaleX(0.897);">Rendering Settings</span>
<div class="b" style="left:154px;top:672.7px;width:150px;height:13.5px;background:#343b4b;border:1px solid #a2a8b6;box-sizing:border-box;"></div>
<span class="t" style="left:-71px;width:600px;text-align:center;transform-origin:50% 50%;top:670.8px;font-size:12px;line-height:16px;color:#f2f3f5;-webkit-text-stroke:0.3px #f2f3f5;transform:scaleX(0.900);">Edit...</span>
<div class="b" style="left:0px;top:703.8px;width:317px;height:1px;background:#434a5c;"></div>
<div class="b" style="left:152px;top:688.2px;width:1px;height:16.7px;background:#434a5c;"></div>
<span class="t" style="left:7.8px;transform-origin:0 50%;top:687.5px;font-size:12px;line-height:16px;color:#7f8799;transform:scaleX(0.923);">Locked Orientation</span>
<div class="b" style="left:157px;top:690.5px;width:11px;height:10.5px;background:#343b4b;border:1px solid #596174;box-sizing:border-box;"></div>
<div class="b" style="left:0px;top:720.5px;width:317px;height:1px;background:#434a5c;"></div>
<div class="b" style="left:152px;top:704.8px;width:1px;height:16.7px;background:#434a5c;"></div>
<span class="t" style="left:7.8px;transform-origin:0 50%;top:704.2px;font-size:12px;line-height:16px;color:#f2f3f5;-webkit-text-stroke:0.3px #f2f3f5;transform:scaleX(0.940);">Projection Mode</span>
<span class="t" style="left:156px;transform-origin:0 50%;top:704.2px;font-size:12px;line-height:16px;color:#f2f3f5;-webkit-text-stroke:0.3px #f2f3f5;transform:scaleX(0.944);">Orthographic</span>
<div class="b" style="left:0px;top:737.2px;width:317px;height:1px;background:#434a5c;"></div>
<div class="b" style="left:152px;top:721.5px;width:1px;height:16.7px;background:#434a5c;"></div>
<span class="t" style="left:7.8px;transform-origin:0 50%;top:720.8px;font-size:12px;line-height:16px;color:#f2f3f5;-webkit-text-stroke:0.3px #f2f3f5;transform:scaleX(0.865);">Eye Elevation</span>
<span class="t" style="left:156px;transform-origin:0 50%;top:720.8px;font-size:12px;line-height:16px;color:#f2f3f5;-webkit-text-stroke:0.3px #f2f3f5;transform:scaleX(0.853);">21795.8</span>
<div class="b" style="left:0px;top:753.8px;width:317px;height:1px;background:#434a5c;"></div>
<div class="b" style="left:152px;top:738.2px;width:1px;height:16.7px;background:#434a5c;"></div>
<span class="t" style="left:7.8px;transform-origin:0 50%;top:737.5px;font-size:12px;line-height:16px;color:#f2f3f5;-webkit-text-stroke:0.3px #f2f3f5;transform:scaleX(0.901);">Target Elevation</span>
<span class="t" style="left:156px;transform-origin:0 50%;top:737.5px;font-size:12px;line-height:16px;color:#f2f3f5;-webkit-text-stroke:0.3px #f2f3f5;transform:scaleX(0.845);">7250.0</span>
<div class="b" style="left:0px;top:770.5px;width:317px;height:1px;background:#434a5c;"></div>
<div class="b" style="left:152px;top:754.8px;width:1px;height:16.7px;background:#434a5c;"></div>
<span class="t" style="left:7.8px;transform-origin:0 50%;top:754.2px;font-size:12px;line-height:16px;color:#7f8799;transform:scaleX(0.902);">Camera Position</span>
<span class="t" style="left:156px;transform-origin:0 50%;top:754.2px;font-size:12px;line-height:16px;color:#7f8799;transform:scaleX(0.942);">Adjusting</span>
<div class="b" style="left:0px;top:771.5px;width:317px;height:16.7px;background:#262c39;"></div>
<span class="t" style="left:3px;transform-origin:0 50%;top:770.8px;font-size:12px;line-height:16px;color:#f2f3f5;-webkit-text-stroke:0.3px #f2f3f5;transform:scaleX(0.900);">Identity Data</span>
<svg class="b" style="left:303px;top:773.3px;" width="8" height="11" viewBox="0 0 8 11"><path d="M1 4.500 4 1.500l3 3M1 9 4 6l3 3" stroke="#f2f3f5" stroke-width="1.300" fill="none"/></svg>
<div class="b" style="left:0px;top:803.8px;width:317px;height:1px;background:#434a5c;"></div>
<div class="b" style="left:152px;top:788.2px;width:1px;height:16.7px;background:#434a5c;"></div>
<span class="t" style="left:7.8px;transform-origin:0 50%;top:787.5px;font-size:12px;line-height:16px;color:#f2f3f5;-webkit-text-stroke:0.3px #f2f3f5;transform:scaleX(0.921);">View Template</span>
<div class="b" style="left:154px;top:789.4px;width:150px;height:13.5px;background:#343b4b;border:1px solid #a2a8b6;box-sizing:border-box;"></div>
<span class="t" style="left:-71px;width:600px;text-align:center;transform-origin:50% 50%;top:787.5px;font-size:12px;line-height:16px;color:#f2f3f5;-webkit-text-stroke:0.3px #f2f3f5;transform:scaleX(0.900);">&lt;None&gt;</span>
<div class="b" style="left:0px;top:820.5px;width:317px;height:1px;background:#434a5c;"></div>
<div class="b" style="left:152px;top:804.8px;width:1px;height:16.7px;background:#434a5c;"></div>
<span class="t" style="left:7.8px;transform-origin:0 50%;top:804.2px;font-size:12px;line-height:16px;color:#f2f3f5;-webkit-text-stroke:0.3px #f2f3f5;transform:scaleX(0.908);">View Name</span>
<span class="t" style="left:156px;transform-origin:0 50%;top:804.2px;font-size:12px;line-height:16px;color:#f2f3f5;-webkit-text-stroke:0.3px #f2f3f5;transform:scaleX(0.937);">3D (Quantity takeoff/Ventila...</span>
<div class="b" style="left:0px;top:837.2px;width:317px;height:1px;background:#434a5c;"></div>
<div class="b" style="left:152px;top:821.5px;width:1px;height:16.7px;background:#434a5c;"></div>
<span class="t" style="left:7.8px;transform-origin:0 50%;top:820.8px;font-size:12px;line-height:16px;color:#7f8799;transform:scaleX(0.898);">Dependency</span>
<span class="t" style="left:156px;transform-origin:0 50%;top:820.8px;font-size:12px;line-height:16px;color:#7f8799;transform:scaleX(0.929);">Independent</span>
<div class="b" style="left:0px;top:853.8px;width:317px;height:1px;background:#434a5c;"></div>
<div class="b" style="left:152px;top:838.2px;width:1px;height:16.7px;background:#434a5c;"></div>
<span class="t" style="left:7.8px;transform-origin:0 50%;top:837.5px;font-size:12px;line-height:16px;color:#f2f3f5;-webkit-text-stroke:0.3px #f2f3f5;transform:scaleX(0.890);">Title on Sheet</span>
<div class="b" style="left:0px;top:854.8px;width:317px;height:16.7px;background:#262c39;"></div>
<span class="t" style="left:3px;transform-origin:0 50%;top:854.2px;font-size:12px;line-height:16px;color:#f2f3f5;-webkit-text-stroke:0.3px #f2f3f5;transform:scaleX(0.900);">Phasing</span>
<svg class="b" style="left:303px;top:856.7px;" width="8" height="11" viewBox="0 0 8 11"><path d="M1 4.500 4 1.500l3 3M1 9 4 6l3 3" stroke="#f2f3f5" stroke-width="1.300" fill="none"/></svg>
<div class="b" style="left:0px;top:887.2px;width:317px;height:1px;background:#434a5c;"></div>
<div class="b" style="left:152px;top:871.5px;width:1px;height:16.7px;background:#434a5c;"></div>
<span class="t" style="left:7.8px;transform-origin:0 50%;top:870.8px;font-size:12px;line-height:16px;color:#f2f3f5;-webkit-text-stroke:0.3px #f2f3f5;transform:scaleX(0.867);">Phase Filter</span>
<span class="t" style="left:156px;transform-origin:0 50%;top:870.8px;font-size:12px;line-height:16px;color:#f2f3f5;-webkit-text-stroke:0.3px #f2f3f5;transform:scaleX(0.895);">Alle anzeigen</span>
<div class="b" style="left:0px;top:903.8px;width:317px;height:1px;background:#434a5c;"></div>
<div class="b" style="left:152px;top:888.2px;width:1px;height:16.7px;background:#434a5c;"></div>
<span class="t" style="left:7.8px;transform-origin:0 50%;top:887.5px;font-size:12px;line-height:16px;color:#f2f3f5;-webkit-text-stroke:0.3px #f2f3f5;transform:scaleX(0.838);">Phase</span>
<span class="t" style="left:156px;transform-origin:0 50%;top:887.5px;font-size:12px;line-height:16px;color:#f2f3f5;-webkit-text-stroke:0.3px #f2f3f5;transform:scaleX(0.927);">Neue Konstruktion</span>
<div class="b" style="left:0px;top:904.8px;width:317px;height:16.7px;background:#262c39;"></div>
<span class="t" style="left:3px;transform-origin:0 50%;top:904.2px;font-size:12px;line-height:16px;color:#f2f3f5;-webkit-text-stroke:0.3px #f2f3f5;transform:scaleX(0.900);">General</span>
<svg class="b" style="left:303px;top:906.7px;" width="8" height="11" viewBox="0 0 8 11"><path d="M1 4.500 4 1.500l3 3M1 9 4 6l3 3" stroke="#f2f3f5" stroke-width="1.300" fill="none"/></svg>
<div class="b" style="left:0px;top:937.2px;width:317px;height:1px;background:#434a5c;"></div>
<div class="b" style="left:152px;top:921.5px;width:1px;height:16.7px;background:#434a5c;"></div>
<span class="t" style="left:7.8px;transform-origin:0 50%;top:920.0px;font-size:12px;line-height:16px;color:#f2f3f5;-webkit-text-stroke:0.3px #f2f3f5;transform:scaleX(0.797);">LIN_LEVEL_OF_GEOMETRY</span>
<div class="b" style="left:306px;top:923.5px;width:9px;height:12.5px;border:1px solid #7b8294;box-sizing:border-box;"></div>
<div class="b" style="left:0px;top:935.3px;width:333px;height:12.5px;background:#3b4253;"></div>
<div class="b" style="left:0px;top:935.3px;width:333px;height:1px;background:#2b313e;"></div>
<div class="b" style="left:2px;top:936px;width:20px;height:12px;background:#3a7cc0;"></div>
<svg class="b" style="left:5px;top:938px;" width="15" height="9" viewBox="0 0 15 9"><path d="M0 3h8M0 6h8" stroke="#cfe2f5" stroke-width="1.300"/><path d="M11.500 8V1M9 3.500 11.500 1 14 3.500" stroke="#ffffff" stroke-width="1.300" fill="none"/></svg>
<span class="t" style="left:29px;transform-origin:0 50%;top:938.0px;font-size:8px;line-height:10px;color:#c9cdd6;font-weight:bold;transform:scaleX(0.917);">A</span>
<div class="b" style="left:38px;top:937px;width:1px;height:10px;background:#c9cdd6;"></div>
<span class="t" style="left:51px;transform-origin:0 50%;top:938.0px;font-size:8px;line-height:10px;color:#c9cdd6;font-weight:bold;transform:scaleX(0.917);">Z</span>
<div class="b" style="left:60px;top:937px;width:1px;height:10px;background:#c9cdd6;"></div>
<div class="b" style="left:265.5px;top:936.5px;width:65px;height:12px;border:1px solid #5d6578;box-sizing:border-box;"></div>
<span class="t" style="left:-2px;width:600px;text-align:center;transform-origin:50% 50%;top:937.5px;font-size:12px;line-height:16px;color:#6b7284;transform:scaleX(0.900);">Apply</span>
<div class="b" style="left:1273px;top:160px;width:233px;height:19px;background:#454c5f;"></div>
<div class="b" style="left:1273px;top:179px;width:233px;height:768px;background:#222a36;"></div>
<div class="b" style="left:1485px;top:179px;width:15px;height:768px;background:#2a3240;"></div>
<div class="b" style="left:1500px;top:160px;width:6px;height:787px;background:#3c4356;"></div>
<div class="b" style="left:1501px;top:179px;width:1px;height:768px;background:#2a303d;"></div>
<svg class="b" style="left:1488px;top:166px;" width="9" height="8" viewBox="0 0 9 8"><rect x="0" y="0" width="9" height="1.800" fill="#c9cdd6"/><path d="M0 3.500h9L4.500 8Z" fill="#c9cdd6"/></svg>
<svg class="b" style="left:1487px;top:184px;" width="11" height="8" viewBox="0 0 11 8"><path d="M1.500 6.500 5.500 2l4 4.500" stroke="#7b8294" stroke-width="1.800" fill="none"/></svg>
<div class="b" style="left:1485px;top:196px;width:15px;height:1px;background:#3b4253;"></div>
<div class="b" style="left:1489px;top:565px;width:6px;height:14px;background:#4b5265;border-radius:3px;"></div>
<svg class="b" style="left:1353px;top:188px;" width="14" height="13" viewBox="0 0 14 13"><path d="M7 0 14 6.500h-1.800V13H8.800V8.500H5.200V13H1.800V6.500H0Z" fill="#9ba2af"/><rect x="10.300" y="1" width="1.900" height="3.500" fill="#9ba2af"/></svg>
<svg class="b" style="left:1335px;top:222px;" width="150" height="110" viewBox="0 0 150 110"><defs><linearGradient id="rg" x1="0" y1="0" x2="0" y2="1"><stop offset="0" stop-color="#8d9098"/><stop offset="1" stop-color="#b4b6bc"/></linearGradient></defs><ellipse cx="66.200" cy="66.800" rx="52.800" ry="32.800" fill="#1b212b" stroke="url(#rg)" stroke-width="12.400"/><path d="M35 23.400 65 9l32.400 14.400L65 41.400Z" fill="#ebebed"/><path d="M35 23.400l30 18 .8 35.200L36.200 59Z" fill="#dddde1"/><path d="M65 41.400l32.400-18-.8 35.600-30.800 17.600Z" fill="#f5f5f7"/><path d="M35 23.400 65 9l32.400 14.400-.8 35.600-30.800 17.600L36.200 59Z" fill="none" stroke="#9a9ca3" stroke-width=".7"/><path d="M35 23.400l30 18 .8 35.200M65 41.400l32.400-18" stroke="#3c3d42" stroke-width=".8" fill="none"/><path d="M66.200 35 85.400 23.400l7.600 2.800L73 38.200Z" fill="#b8dcf8" stroke="#3583d2" stroke-width="1" stroke-linejoin="round"/><path d="M73 38.200l20-12-.4 7.200-20.400 12Z" fill="#a6d1f3" stroke="#3583d2" stroke-width="1" stroke-linejoin="round"/><text transform="translate(65 23.500) rotate(-32) skewX(-18)" font-family="Liberation Sans" font-weight="bold" font-size="8.500" fill="#2c2c30" text-anchor="middle" dy="3" textLength="15" lengthAdjust="spacingAndGlyphs">TOP</text><text transform="matrix(.86 .5 0 1 50.200 54)" font-family="Liberation Sans" font-weight="bold" font-size="9.500" fill="#2c2c30" text-anchor="middle" textLength="17" lengthAdjust="spacingAndGlyphs">LEFT</text><text transform="matrix(.87 -.49 0 1 82 54.500)" font-family="Liberation Sans" font-weight="bold" font-size="9.500" fill="#2c2c30" text-anchor="middle" textLength="25" lengthAdjust="spacingAndGlyphs">FRONT</text><text transform="translate(22 88.500) rotate(152)" font-family="Liberation Sans" font-weight="bold" font-size="17" fill="#f1f1f2" text-anchor="middle" dy="6">M</text><text transform="translate(109.500 88.500) rotate(-25)" font-family="Liberation Sans" font-weight="bold" font-size="17" fill="#f1f1f2" text-anchor="middle" dy="6">S</text><text transform="translate(29.500 41.500) rotate(-35)" font-family="Liberation Sans" font-weight="bold" font-size="9" fill="#e3e3e5" text-anchor="middle" dy="3">N</text><text transform="translate(104 41.500) rotate(30)" font-family="Liberation Sans" font-weight="bold" font-size="9" fill="#e3e3e5" text-anchor="middle" dy="3">E</text></svg>
<svg class="b" style="left:1466px;top:311px;" width="10" height="8" viewBox="0 0 10 8"><rect x="0" y="0" width="10" height="1.800" fill="#c9cdd6"/><path d="M0 3.500h10L5 8Z" fill="#c9cdd6"/></svg>
<div class="b" style="left:1452.5px;top:340px;width:30.5px;height:106.5px;background:#92969e;border:1px solid #2b2f3a;box-sizing:border-box;border-radius:4.500px;"></div>
<svg class="b" style="left:1472px;top:341px;" width="9" height="9" viewBox="0 0 9 9"><circle cx="4.500" cy="4.500" r="4" fill="#3a3f4a"/><path d="M2.800 2.800l3.400 3.400M6.200 2.800 2.800 6.200" stroke="#e8eaee" stroke-width="1"/></svg>
<svg class="b" style="left:1456px;top:357px;" width="23" height="23" viewBox="0 0 23 23"><path d="M11.500 1a10.500 10.500 0 0 1 10.500 10.500V18a4 4 0 0 1-4 4H5a4 4 0 0 1-4-4v-6.500A10.500 10.500 0 0 1 11.500 1Z" fill="#d9dbe0" stroke="#5a5f6a" stroke-width="1"/><circle cx="11.500" cy="11.500" r="6.500" fill="#eceef1" stroke="#5a5f6a" stroke-width="1.200"/><circle cx="11.500" cy="11.500" r="3.800" fill="#c4c7ce" stroke="#6a6f7a" stroke-width=".8"/></svg>
<svg class="b" style="left:1464px;top:385px;" width="7" height="4" viewBox="0 0 7 4"><path d="M0 0h7L3.500 4Z" fill="#4a4f5a"/></svg>
<div class="b" style="left:1455px;top:393px;width:26px;height:1px;background:#82868f;"></div>
<svg class="b" style="left:1459px;top:400px;" width="18" height="20" viewBox="0 0 18 20"><circle cx="7" cy="7" r="5" fill="none" stroke="#5a5f6a" stroke-width="1.200" stroke-dasharray="2 2.500"/><circle cx="11" cy="11.500" r="3" fill="#eceef1" stroke="#5a5f6a" stroke-width="1"/><path d="M13 14l3 3.500" stroke="#5a5f6a" stroke-width="1.600"/></svg>
<svg class="b" style="left:1464px;top:425px;" width="7" height="4" viewBox="0 0 7 4"><path d="M0 0h7L3.500 4Z" fill="#4a4f5a"/></svg>
<svg class="b" style="left:1473px;top:437px;" width="8" height="8" viewBox="0 0 8 8"><circle cx="4" cy="4" r="3.500" fill="#3a3f4a"/><rect x="2" y="2.500" width="4" height="1" fill="#e8eaee"/><path d="M2 4.500h4L4 6.500Z" fill="#e8eaee"/></svg>
<div class="b" style="left:1506px;top:160px;width:272px;height:787px;background:#50576b;"></div>
<div class="b" style="left:1504px;top:160px;width:274px;height:15px;background:#262c39;"></div>
<span class="t" style="left:1507px;transform-origin:0 50%;top:160.0px;font-size:12px;line-height:16px;color:#f2f3f5;-webkit-text-stroke:0.3px #f2f3f5;transform:scaleX(0.830);">LINEAR</span>
<div class="b" style="left:1506px;top:175px;width:272px;height:36px;background:#272e3b;"></div>
<div class="b" style="left:1669px;top:176px;width:53px;height:35px;background:#50576b;"></div>
<div class="b" style="left:1669px;top:176px;width:53px;height:4px;background:#6d92ea;"></div>
<div class="b" style="left:1521px;top:187px;width:24px;height:3px;background:#ffffff;"></div>
<div class="b" style="left:1521px;top:193.5px;width:24px;height:3px;background:#ffffff;"></div>
<div class="b" style="left:1521px;top:200px;width:24px;height:3px;background:#ffffff;"></div>
<svg class="b" style="left:1574px;top:183px;" width="26" height="26" viewBox="0 0 26 26"><path d="M12 4H2v19h19V13" fill="none" stroke="#f2f3f5" stroke-width="2"/><path d="M8 13 19 1.500l4.500 4.500L12.500 17.500 6.500 19Z" fill="#272e3b" stroke="#f2f3f5" stroke-width="1.800"/><path d="M6.500 19l1.500-5 3.500 3.500Z" fill="#f2f3f5"/><path d="M17 3.500l4.500 4.500" stroke="#f2f3f5" stroke-width="1.500"/></svg>
<svg class="b" style="left:1630px;top:184px;" width="24" height="23" viewBox="0 0 24 23"><g fill="none" stroke="#6d7384" stroke-width="1.500"><rect x="1" y="1" width="6" height="21"/><rect x="9" y="1" width="6" height="21"/><rect x="17" y="1" width="6" height="21"/><path d="M1 5h6M9 5h6M17 5h6M1 18h6M9 18h6M17 18h6"/></g></svg>
<svg class="b" style="left:1685px;top:183px;" width="21" height="25" viewBox="0 0 21 25"><rect x="1.200" y="1.200" width="18.600" height="22.600" rx="1.500" fill="none" stroke="#f2f3f5" stroke-width="2"/><rect x="4.500" y="4.500" width="12" height="5" fill="none" stroke="#f2f3f5" stroke-width="1.600"/><g fill="#f2f3f5"><rect x="4" y="12.500" width="3.200" height="3"/><rect x="8.900" y="12.500" width="3.200" height="3"/><rect x="13.800" y="12.500" width="3.200" height="3"/><rect x="4" y="17.500" width="3.200" height="3"/><rect x="8.900" y="17.500" width="3.200" height="3"/><rect x="13.800" y="17.500" width="3.200" height="3"/></g></svg>
<svg class="b" style="left:1738px;top:185px;" width="24" height="21" viewBox="0 0 24 21"><path d="M12 2 22.500 19.500h-21Z" fill="none" stroke="#f2f3f5" stroke-width="2" stroke-linejoin="round"/><rect x="11" y="7.500" width="2" height="6.500" fill="#f2f3f5"/><rect x="11" y="15.500" width="2" height="2" fill="#f2f3f5"/></svg>
<span class="t" style="left:1516px;transform-origin:0 50%;top:223.5px;font-size:14px;line-height:18px;color:#eceef2;transform:scaleX(0.890);">Quantity takeoff</span>
<div class="b" style="left:1512px;top:252px;width:256px;height:275px;background:#3d4457;"></div>
<div class="b" style="left:1512px;top:252px;width:240px;height:20px;background:#4a5165;"></div>
<div class="b" style="left:1752px;top:252px;width:16px;height:20px;background:#434a5d;"></div>
<svg class="b" style="left:1757px;top:260.5px;" width="7" height="4" viewBox="0 0 7 4"><path d="M0 4h7L3.500 0Z" fill="#f2f3f5"/></svg>
<svg class="b" style="left:1517px;top:254px" width="15" height="16" viewBox="0 0 15 16"><path d="M9 4V1H1v14h8v-3" fill="none" stroke="#e8eaee" stroke-width="1.400"/><path d="M5 8h7M9.500 5l3 3-3 3" fill="none" stroke="#6fc0ee" stroke-width="1.800"/></svg>
<span class="t" style="left:1536px;transform-origin:0 50%;top:254.0px;font-size:12.5px;line-height:16px;color:#f2f3f5;-webkit-text-stroke:0.3px #f2f3f5;transform:scaleX(0.874);">e-klimaX export ...</span>
<span class="t" style="left:1518px;transform-origin:0 50%;top:284.5px;font-size:12px;line-height:16px;color:#f2f3f5;font-weight:bold;transform:scaleX(0.882);">Sections to be exported</span>
<div class="b" style="left:1519.500px;top:307px;width:12px;height:12px;border-radius:50%;box-sizing:border-box;border:1px solid #d5d8de;background:#353c4d;"></div>
<div class="b" style="left:1522.500px;top:310px;width:6px;height:6px;border-radius:50%;background:#ffffff;"></div>
<span class="t" style="left:1535px;transform-origin:0 50%;top:305.0px;font-size:12px;line-height:16px;color:#f2f3f5;-webkit-text-stroke:0.3px #f2f3f5;transform:scaleX(0.892);">(Pre)selection</span>
<div class="b" style="left:1519.500px;top:325px;width:12px;height:12px;border-radius:50%;box-sizing:border-box;border:1px solid #7d8496;background:#353c4d;"></div>
<span class="t" style="left:1535px;transform-origin:0 50%;top:323.0px;font-size:12px;line-height:16px;color:#f2f3f5;-webkit-text-stroke:0.3px #f2f3f5;transform:scaleX(0.921);">Current view</span>
<div class="b" style="left:1519.500px;top:344px;width:12px;height:12px;border-radius:50%;box-sizing:border-box;border:1px solid #7d8496;background:#353c4d;"></div>
<span class="t" style="left:1535px;transform-origin:0 50%;top:342.0px;font-size:12px;line-height:16px;color:#f2f3f5;-webkit-text-stroke:0.3px #f2f3f5;transform:scaleX(0.934);">Entire project</span>
<span class="t" style="left:1518px;transform-origin:0 50%;top:372.5px;font-size:12px;line-height:16px;color:#f2f3f5;font-weight:bold;transform:scaleX(0.892);">Components to be included</span>
<div class="b" style="left:1520px;top:395px;width:12px;height:12px;background:#353c4d;border:1px solid #646b7e;box-sizing:border-box;"></div>
<span class="t" style="left:1535px;transform-origin:0 50%;top:393.0px;font-size:12px;line-height:16px;color:#f2f3f5;-webkit-text-stroke:0.3px #f2f3f5;transform:scaleX(0.925);">Exported components</span>
<div class="b" style="left:1520px;top:413px;width:12px;height:12px;background:#353c4d;border:1px solid #646b7e;box-sizing:border-box;"></div>
<span class="t" style="left:1535px;transform-origin:0 50%;top:411.0px;font-size:12px;line-height:16px;color:#f2f3f5;-webkit-text-stroke:0.3px #f2f3f5;transform:scaleX(0.949);">Round ducts/fittings</span>
<div class="b" style="left:1520px;top:432px;width:12px;height:12px;background:#353c4d;border:1px solid #646b7e;box-sizing:border-box;"></div>
<span class="t" style="left:1535px;transform-origin:0 50%;top:430.0px;font-size:12px;line-height:16px;color:#f2f3f5;-webkit-text-stroke:0.3px #f2f3f5;transform:scaleX(0.925);">Include flexible ducts</span>
<span class="t" style="left:1519px;transform-origin:0 50%;top:460.5px;font-size:12px;line-height:16px;color:#f2f3f5;font-weight:bold;transform:scaleX(0.880);">Further options</span>
<div class="b" style="left:1520px;top:482.5px;width:12px;height:12px;background:#353c4d;border:1px solid #646b7e;box-sizing:border-box;"></div>
<span class="t" style="left:1535px;transform-origin:0 50%;top:480.5px;font-size:12px;line-height:16px;color:#f2f3f5;-webkit-text-stroke:0.3px #f2f3f5;transform:scaleX(0.938);">Itemize positions individually</span>
<div class="b" style="left:1520px;top:501.5px;width:12px;height:12px;background:#353c4d;border:1px solid #646b7e;box-sizing:border-box;"></div>
<svg class="b" style="left:1520px;top:501.5px;" width="12" height="12" viewBox="0 0 12 12"><path d="M2.500 6.200 5 9l4.500-6.500" stroke="#ffffff" stroke-width="1.600" fill="none"/></svg>
<span class="t" style="left:1535px;transform-origin:0 50%;top:499.5px;font-size:12px;line-height:16px;color:#f2f3f5;-webkit-text-stroke:0.3px #f2f3f5;transform:scaleX(0.934);">Compute cuttings in ducts</span>
<div class="b" style="left:1512px;top:541px;width:256px;height:198px;background:#3d4457;"></div>
<div class="b" style="left:1512px;top:541px;width:240px;height:20px;background:#4a5165;"></div>
<div class="b" style="left:1752px;top:541px;width:16px;height:20px;background:#434a5d;"></div>
<svg class="b" style="left:1757px;top:549.5px;" width="7" height="4" viewBox="0 0 7 4"><path d="M0 4h7L3.500 0Z" fill="#f2f3f5"/></svg>
<svg class="b" style="left:1517px;top:543px" width="16" height="16" viewBox="0 0 16 16"><rect x="0" y="0" width="15" height="15" fill="#f4f4f4"/><g fill="#3d4457"><rect x="2" y="2.500" width="2" height="2"/><rect x="5.500" y="3" width="7.500" height="1.300"/><rect x="2" y="6.500" width="2" height="2"/><rect x="5.500" y="7" width="7.500" height="1.300"/><rect x="2" y="10.500" width="2" height="2"/><rect x="5.500" y="11" width="4" height="1.300"/></g><path d="M8 12l4-4 3 3-4 4Z" fill="#f0a62a"/></svg>
<span class="t" style="left:1536px;transform-origin:0 50%;top:543.0px;font-size:12.5px;line-height:16px;color:#f2f3f5;-webkit-text-stroke:0.3px #f2f3f5;transform:scaleX(0.891);">Quantity takeoff (Ventilation) ...</span>
<span class="t" style="left:1519px;transform-origin:0 50%;top:573.5px;font-size:12px;line-height:16px;color:#f2f3f5;font-weight:bold;transform:scaleX(0.857);">Reference standard</span>
<div class="b" style="left:1518px;top:595px;width:244px;height:19px;background:#3d4457;border:1px solid #596074;box-sizing:border-box;"></div>
<span class="t" style="left:1524px;transform-origin:0 50%;top:597.0px;font-size:12px;line-height:16px;color:#f2f3f5;-webkit-text-stroke:0.3px #f2f3f5;transform:scaleX(0.914);">DIN 18379 / DIN 18421</span>
<svg class="b" style="left:1750px;top:601px;" width="8" height="6" viewBox="0 0 8 6"><path d="M1 1l3 3.500L7 1" stroke="#f2f3f5" stroke-width="1.500" fill="none"/></svg>
<span class="t" style="left:1518px;transform-origin:0 50%;top:630.7px;font-size:12px;line-height:16px;color:#f2f3f5;font-weight:bold;transform:scaleX(0.882);">Sections to be exported</span>
<div class="b" style="left:1519.500px;top:653px;width:12px;height:12px;border-radius:50%;box-sizing:border-box;border:1px solid #7d8496;background:#353c4d;"></div>
<span class="t" style="left:1535px;transform-origin:0 50%;top:651.0px;font-size:12px;line-height:16px;color:#f2f3f5;-webkit-text-stroke:0.3px #f2f3f5;transform:scaleX(0.892);">(Pre)selection</span>
<div class="b" style="left:1519.500px;top:671.7px;width:12px;height:12px;border-radius:50%;box-sizing:border-box;border:1px solid #d5d8de;background:#353c4d;"></div>
<div class="b" style="left:1522.500px;top:674.7px;width:6px;height:6px;border-radius:50%;background:#ffffff;"></div>
<span class="t" style="left:1535px;transform-origin:0 50%;top:669.7px;font-size:12px;line-height:16px;color:#f2f3f5;-webkit-text-stroke:0.3px #f2f3f5;transform:scaleX(0.921);">Current view</span>
<div class="b" style="left:1519.500px;top:690.5px;width:12px;height:12px;border-radius:50%;box-sizing:border-box;border:1px solid #7d8496;background:#353c4d;"></div>
<span class="t" style="left:1535px;transform-origin:0 50%;top:688.5px;font-size:12px;line-height:16px;color:#f2f3f5;-webkit-text-stroke:0.3px #f2f3f5;transform:scaleX(0.934);">Entire project</span>
<div class="b" style="left:1518px;top:720px;width:12px;height:12px;background:#353c4d;border:1px solid #646b7e;box-sizing:border-box;"></div>
<svg class="b" style="left:1518px;top:720px;" width="12" height="12" viewBox="0 0 12 12"><path d="M2.500 6.200 5 9l4.500-6.500" stroke="#ffffff" stroke-width="1.600" fill="none"/></svg>
<span class="t" style="left:1534px;transform-origin:0 50%;top:718.0px;font-size:12px;line-height:16px;color:#f2f3f5;-webkit-text-stroke:0.3px #f2f3f5;transform:scaleX(0.927);">Include exported components</span>
<div class="b" style="left:362px;top:46px;width:911px;height:901px;background:#f0eff1;border-radius:8px 8px 0 0;box-shadow:0 0 0 1px rgba(120,125,140,.55);overflow:hidden;"><div style="height:28px;background:#fff;"></div></div>
<svg class="b" style="left:370px;top:53px;" width="14" height="14" viewBox="0 0 14 14"><path d="M0 2.700 4.300 0 12.800 5v3.800l-4 2.700V5.200L6.500 4 4.300 5.200V14L.3 11.500Z" fill="#1f4b4d"/></svg>
<span class="t" style="left:389px;transform-origin:0 50%;top:52.0px;font-size:12px;line-height:16px;color:#7b7b7b;transform:scaleX(0.900);">Quantity takeoff (DIN 18379 / DIN 18421)</span>
<span class="t" style="left:910px;width:600px;text-align:center;transform-origin:50% 50%;top:51.0px;font-size:12px;line-height:16px;color:#7b7b7b;transform:scaleX(0.900);">?</span>
<svg class="b" style="left:1246.5px;top:54px;" width="11" height="11" viewBox="0 0 11 11"><path d="M.5 .5l10 10M10.500 .5l-10 10" stroke="#7d7d7d" stroke-width="1"/></svg>
<span class="t" style="left:369px;transform-origin:0 50%;top:84.0px;font-size:14px;line-height:18px;color:#1a1a1a;font-weight:bold;transform:scaleX(0.883);">Configuration</span>
<svg class="b" style="left:375px;top:115px;" width="17" height="14" viewBox="0 0 17 14"><path d="M0 1.500h5.500l1.500 2H13V6H4L0 12Z" fill="#e89a10"/><path d="M4 6.500h13L13.500 13H.5Z" fill="#f7b42c"/></svg>
<svg class="b" style="left:401px;top:115px;" width="15" height="15" viewBox="0 0 15 15"><path d="M0 0h15v15H0Z" fill="#4a4a4e"/><rect x="3" y="0" width="9" height="5.500" fill="#d8d8dc"/><rect x="2.500" y="8.500" width="10" height="6.500" fill="#d8d8dc"/><rect x="4" y="10" width="7" height="1.300" fill="#4a4a4e"/><rect x="4" y="12.500" width="7" height="1.300" fill="#4a4a4e"/></svg>
<svg class="b" style="left:1209px;top:115.5px;" width="15" height="14" viewBox="0 0 15 14"><path d="M0 4.700 7 .3v8.800Z" fill="#1b7fd0"/><path d="M6 4.700h4.300a3.900 3.900 0 0 1 0 7.800H.5" fill="none" stroke="#1b7fd0" stroke-width="1.900"/></svg>
<span class="t" style="left:1229px;transform-origin:0 50%;top:115.0px;font-size:12px;line-height:16px;color:#1a1a1a;-webkit-text-stroke:0.15px #1a1a1a;transform:scaleX(0.861);">Reset</span>
<div class="b" style="left:368px;top:142.5px;width:899px;height:207.5px;background:#ffffff;border:1.500px solid #868b96;box-sizing:border-box;"></div>
<div class="b" style="left:370px;top:144px;width:879.700px;height:20px;background:linear-gradient(#ffffff,#f6f6fa);"></div>
<div class="b" style="left:370px;top:164px;width:879.7px;height:1px;background:#d5d5da;"></div>
<div class="b" style="left:633px;top:144px;width:1px;height:204.5px;background:#dcdce0;"></div>
<div class="b" style="left:737px;top:144px;width:1px;height:204.5px;background:#dcdce0;"></div>
<span class="t" style="left:374px;transform-origin:0 50%;top:146.5px;font-size:12px;line-height:16px;color:#1a1a1a;-webkit-text-stroke:0.15px #1a1a1a;transform:scaleX(0.918);">Assembly group</span>
<span class="t" style="left:638px;transform-origin:0 50%;top:146.5px;font-size:12px;line-height:16px;color:#1a1a1a;-webkit-text-stroke:0.15px #1a1a1a;transform:scaleX(0.892);">Reference standard</span>
<span class="t" style="left:742px;transform-origin:0 50%;top:146.5px;font-size:12px;line-height:16px;color:#1a1a1a;-webkit-text-stroke:0.15px #1a1a1a;transform:scaleX(0.925);">Short text</span>
<div class="b" style="left:370px;top:187.2px;width:879.7px;height:1px;background:#d5d5da;"></div>
<span class="t" style="left:371px;transform-origin:0 50%;top:168.8px;font-size:12px;line-height:16px;color:#1a1a1a;-webkit-text-stroke:0.15px #1a1a1a;transform:scaleX(0.915);">Ventilation systems</span>
<span class="t" style="left:635px;transform-origin:0 50%;top:168.8px;font-size:12px;line-height:16px;color:#1a1a1a;-webkit-text-stroke:0.15px #1a1a1a;transform:scaleX(0.907);">DIN18379</span>
<div class="b" style="left:743px;top:167.5px;width:93.5px;height:17.5px;background:#ffffff;border:1px solid #9c9c9c;box-sizing:border-box;border-radius:2px;"></div>
<span class="t" style="left:746px;transform-origin:0 50%;top:168.8px;font-size:12px;line-height:16px;color:#1a1a1a;-webkit-text-stroke:0.15px #1a1a1a;transform:scaleX(0.923);">Component name</span>
<div class="b" style="left:1231.2px;top:165.5px;width:18.5px;height:21.1px;background:#fdfdfe;border:1px solid #e0e0e5;box-sizing:border-box;"></div>
<span class="t" style="left:940.3px;width:600px;text-align:center;transform-origin:50% 50%;top:169.8px;font-size:11px;line-height:14px;color:#1a1a1a;font-weight:bold;transform:scaleX(0.850);">...</span>
<div class="b" style="left:370px;top:210.3px;width:879.7px;height:1px;background:#d5d5da;"></div>
<span class="t" style="left:371px;transform-origin:0 50%;top:191.9px;font-size:12px;line-height:16px;color:#8f8f8f;transform:scaleX(0.953);">Ventilation trim</span>
<span class="t" style="left:635px;transform-origin:0 50%;top:191.9px;font-size:12px;line-height:16px;color:#8f8f8f;transform:scaleX(0.907);">DIN18379</span>
<div class="b" style="left:743px;top:190.7px;width:93.5px;height:17.5px;background:#ffffff;border:1px solid #9c9c9c;box-sizing:border-box;border-radius:2px;"></div>
<span class="t" style="left:746px;transform-origin:0 50%;top:191.9px;font-size:12px;line-height:16px;color:#1a1a1a;-webkit-text-stroke:0.15px #1a1a1a;transform:scaleX(0.923);">Component name</span>
<div class="b" style="left:838.7px;top:190.7px;width:58px;height:17.5px;background:#ffffff;border:1px solid #9c9c9c;box-sizing:border-box;border-radius:2px;"></div>
<span class="t" style="left:841.7px;transform-origin:0 50%;top:191.9px;font-size:12px;line-height:16px;color:#1a1a1a;-webkit-text-stroke:0.15px #1a1a1a;transform:scaleX(0.917);">Dimension</span>
<div class="b" style="left:1231.2px;top:188.7px;width:18.5px;height:21.1px;background:#fdfdfe;border:1px solid #e0e0e5;box-sizing:border-box;"></div>
<span class="t" style="left:940.3px;width:600px;text-align:center;transform-origin:50% 50%;top:192.9px;font-size:11px;line-height:14px;color:#1a1a1a;font-weight:bold;transform:scaleX(0.850);">...</span>
<div class="b" style="left:370px;top:233.5px;width:879.7px;height:1px;background:#d5d5da;"></div>
<span class="t" style="left:371px;transform-origin:0 50%;top:215.1px;font-size:12px;line-height:16px;color:#1a1a1a;-webkit-text-stroke:0.15px #1a1a1a;transform:scaleX(0.946);">Air grille</span>
<span class="t" style="left:635px;transform-origin:0 50%;top:215.1px;font-size:12px;line-height:16px;color:#1a1a1a;-webkit-text-stroke:0.15px #1a1a1a;transform:scaleX(0.907);">DIN18379</span>
<div class="b" style="left:743px;top:213.8px;width:93.5px;height:17.5px;background:#ffffff;border:1px solid #9c9c9c;box-sizing:border-box;border-radius:2px;"></div>
<span class="t" style="left:746px;transform-origin:0 50%;top:215.1px;font-size:12px;line-height:16px;color:#1a1a1a;-webkit-text-stroke:0.15px #1a1a1a;transform:scaleX(0.923);">Component name</span>
<div class="b" style="left:838.7px;top:213.8px;width:58px;height:17.5px;background:#ffffff;border:1px solid #9c9c9c;box-sizing:border-box;border-radius:2px;"></div>
<span class="t" style="left:841.7px;transform-origin:0 50%;top:215.1px;font-size:12px;line-height:16px;color:#1a1a1a;-webkit-text-stroke:0.15px #1a1a1a;transform:scaleX(0.917);">Dimension</span>
<div class="b" style="left:1231.2px;top:211.8px;width:18.5px;height:21.1px;background:#fdfdfe;border:1px solid #e0e0e5;box-sizing:border-box;"></div>
<span class="t" style="left:940.3px;width:600px;text-align:center;transform-origin:50% 50%;top:216.1px;font-size:11px;line-height:14px;color:#1a1a1a;font-weight:bold;transform:scaleX(0.850);">...</span>
<div class="b" style="left:370px;top:256.6px;width:879.7px;height:1px;background:#d5d5da;"></div>
<span class="t" style="left:371px;transform-origin:0 50%;top:238.2px;font-size:12px;line-height:16px;color:#8f8f8f;transform:scaleX(0.948);">Ventilation flap</span>
<span class="t" style="left:635px;transform-origin:0 50%;top:238.2px;font-size:12px;line-height:16px;color:#8f8f8f;transform:scaleX(0.907);">DIN18379</span>
<div class="b" style="left:743px;top:236.9px;width:93.5px;height:17.5px;background:#ffffff;border:1px solid #9c9c9c;box-sizing:border-box;border-radius:2px;"></div>
<span class="t" style="left:746px;transform-origin:0 50%;top:238.2px;font-size:12px;line-height:16px;color:#1a1a1a;-webkit-text-stroke:0.15px #1a1a1a;transform:scaleX(0.923);">Component name</span>
<div class="b" style="left:838.7px;top:236.9px;width:117.5px;height:17.5px;background:#ffffff;border:1px solid #9c9c9c;box-sizing:border-box;border-radius:2px;"></div>
<span class="t" style="left:841.7px;transform-origin:0 50%;top:238.2px;font-size:12px;line-height:16px;color:#1a1a1a;-webkit-text-stroke:0.15px #1a1a1a;transform:scaleX(0.924);">Insulation specification</span>
<div class="b" style="left:958.4000000000001px;top:236.9px;width:58px;height:17.5px;background:#ffffff;border:1px solid #9c9c9c;box-sizing:border-box;border-radius:2px;"></div>
<span class="t" style="left:961.4000000000001px;transform-origin:0 50%;top:238.2px;font-size:12px;line-height:16px;color:#1a1a1a;-webkit-text-stroke:0.15px #1a1a1a;transform:scaleX(0.917);">Dimension</span>
<div class="b" style="left:1231.2px;top:234.9px;width:18.5px;height:21.1px;background:#fdfdfe;border:1px solid #e0e0e5;box-sizing:border-box;"></div>
<span class="t" style="left:940.3px;width:600px;text-align:center;transform-origin:50% 50%;top:239.2px;font-size:11px;line-height:14px;color:#1a1a1a;font-weight:bold;transform:scaleX(0.850);">...</span>
<div class="b" style="left:370px;top:257.1px;width:879.7px;height:23.1px;background:#f0f0f4;"></div>
<div class="b" style="left:370px;top:279.8px;width:879.7px;height:1px;background:#d5d5da;"></div>
<span class="t" style="left:371px;transform-origin:0 50%;top:261.4px;font-size:12px;line-height:16px;color:#1a1a1a;-webkit-text-stroke:0.15px #1a1a1a;transform:scaleX(0.925);">Sound absorber</span>
<span class="t" style="left:635px;transform-origin:0 50%;top:261.4px;font-size:12px;line-height:16px;color:#1a1a1a;-webkit-text-stroke:0.15px #1a1a1a;transform:scaleX(0.907);">DIN18379</span>
<div class="b" style="left:743px;top:260.1px;width:93.5px;height:17.5px;background:#ffffff;border:1px solid #9c9c9c;box-sizing:border-box;border-radius:2px;"></div>
<span class="t" style="left:746px;transform-origin:0 50%;top:261.4px;font-size:12px;line-height:16px;color:#1a1a1a;-webkit-text-stroke:0.15px #1a1a1a;transform:scaleX(0.923);">Component name</span>
<div class="b" style="left:838.7px;top:260.1px;width:117.5px;height:17.5px;background:#ffffff;border:1px solid #9c9c9c;box-sizing:border-box;border-radius:2px;"></div>
<span class="t" style="left:841.7px;transform-origin:0 50%;top:261.4px;font-size:12px;line-height:16px;color:#1a1a1a;-webkit-text-stroke:0.15px #1a1a1a;transform:scaleX(0.924);">Insulation specification</span>
<div class="b" style="left:958.4000000000001px;top:260.1px;width:58px;height:17.5px;background:#ffffff;border:1px solid #9c9c9c;box-sizing:border-box;border-radius:2px;"></div>
<span class="t" style="left:961.4000000000001px;transform-origin:0 50%;top:261.4px;font-size:12px;line-height:16px;color:#1a1a1a;-webkit-text-stroke:0.15px #1a1a1a;transform:scaleX(0.917);">Dimension</span>
<div class="b" style="left:1018.6000000000001px;top:260.1px;width:69px;height:17.5px;background:#ffffff;border:1px solid #9c9c9c;box-sizing:border-box;border-radius:2px;"></div>
<span class="t" style="left:1021.6000000000001px;transform-origin:0 50%;top:261.4px;font-size:12px;line-height:16px;color:#1a1a1a;-webkit-text-stroke:0.15px #1a1a1a;transform:scaleX(0.935);">Item number</span>
<div class="b" style="left:1231.2px;top:258.1px;width:18.5px;height:21.1px;background:#fdfdfe;border:1px solid #e0e0e5;box-sizing:border-box;"></div>
<span class="t" style="left:940.3px;width:600px;text-align:center;transform-origin:50% 50%;top:262.4px;font-size:11px;line-height:14px;color:#1a1a1a;font-weight:bold;transform:scaleX(0.850);">...</span>
<div class="b" style="left:370px;top:302.9px;width:879.7px;height:1px;background:#d5d5da;"></div>
<span class="t" style="left:371px;transform-origin:0 50%;top:284.5px;font-size:12px;line-height:16px;color:#8f8f8f;transform:scaleX(0.933);">Other</span>
<span class="t" style="left:635px;transform-origin:0 50%;top:284.5px;font-size:12px;line-height:16px;color:#8f8f8f;transform:scaleX(0.907);">DIN18379</span>
<div class="b" style="left:743px;top:283.2px;width:93.5px;height:17.5px;background:#ffffff;border:1px solid #9c9c9c;box-sizing:border-box;border-radius:2px;"></div>
<span class="t" style="left:746px;transform-origin:0 50%;top:284.5px;font-size:12px;line-height:16px;color:#1a1a1a;-webkit-text-stroke:0.15px #1a1a1a;transform:scaleX(0.923);">Component name</span>
<div class="b" style="left:838.7px;top:283.2px;width:117.5px;height:17.5px;background:#ffffff;border:1px solid #9c9c9c;box-sizing:border-box;border-radius:2px;"></div>
<span class="t" style="left:841.7px;transform-origin:0 50%;top:284.5px;font-size:12px;line-height:16px;color:#1a1a1a;-webkit-text-stroke:0.15px #1a1a1a;transform:scaleX(0.924);">Insulation specification</span>
<div class="b" style="left:958.4000000000001px;top:283.2px;width:58px;height:17.5px;background:#ffffff;border:1px solid #9c9c9c;box-sizing:border-box;border-radius:2px;"></div>
<span class="t" style="left:961.4000000000001px;transform-origin:0 50%;top:284.5px;font-size:12px;line-height:16px;color:#1a1a1a;-webkit-text-stroke:0.15px #1a1a1a;transform:scaleX(0.917);">Dimension</span>
<div class="b" style="left:1231.2px;top:281.2px;width:18.5px;height:21.1px;background:#fdfdfe;border:1px solid #e0e0e5;box-sizing:border-box;"></div>
<span class="t" style="left:940.3px;width:600px;text-align:center;transform-origin:50% 50%;top:285.5px;font-size:11px;line-height:14px;color:#1a1a1a;font-weight:bold;transform:scaleX(0.850);">...</span>
<div class="b" style="left:370px;top:326.0px;width:879.7px;height:1px;background:#d5d5da;"></div>
<span class="t" style="left:371px;transform-origin:0 50%;top:307.7px;font-size:12px;line-height:16px;color:#8f8f8f;transform:scaleX(0.939);">Droplet panel</span>
<span class="t" style="left:635px;transform-origin:0 50%;top:307.7px;font-size:12px;line-height:16px;color:#8f8f8f;transform:scaleX(0.907);">DIN18379</span>
<div class="b" style="left:743px;top:306.4px;width:93.5px;height:17.5px;background:#ffffff;border:1px solid #9c9c9c;box-sizing:border-box;border-radius:2px;"></div>
<span class="t" style="left:746px;transform-origin:0 50%;top:307.7px;font-size:12px;line-height:16px;color:#1a1a1a;-webkit-text-stroke:0.15px #1a1a1a;transform:scaleX(0.923);">Component name</span>
<div class="b" style="left:838.7px;top:306.4px;width:117.5px;height:17.5px;background:#ffffff;border:1px solid #9c9c9c;box-sizing:border-box;border-radius:2px;"></div>
<span class="t" style="left:841.7px;transform-origin:0 50%;top:307.7px;font-size:12px;line-height:16px;color:#1a1a1a;-webkit-text-stroke:0.15px #1a1a1a;transform:scaleX(0.924);">Insulation specification</span>
<div class="b" style="left:958.4000000000001px;top:306.4px;width:58px;height:17.5px;background:#ffffff;border:1px solid #9c9c9c;box-sizing:border-box;border-radius:2px;"></div>
<span class="t" style="left:961.4000000000001px;transform-origin:0 50%;top:307.7px;font-size:12px;line-height:16px;color:#1a1a1a;-webkit-text-stroke:0.15px #1a1a1a;transform:scaleX(0.917);">Dimension</span>
<div class="b" style="left:1231.2px;top:304.4px;width:18.5px;height:21.1px;background:#fdfdfe;border:1px solid #e0e0e5;box-sizing:border-box;"></div>
<span class="t" style="left:940.3px;width:600px;text-align:center;transform-origin:50% 50%;top:308.7px;font-size:11px;line-height:14px;color:#1a1a1a;font-weight:bold;transform:scaleX(0.850);">...</span>
<span class="t" style="left:371px;transform-origin:0 50%;top:330.8px;font-size:12px;line-height:16px;color:#8f8f8f;transform:scaleX(0.825);clip-path:inset(0 0 0 0);">Fans</span>
<span class="t" style="left:635px;transform-origin:0 50%;top:330.8px;font-size:12px;line-height:16px;color:#8f8f8f;transform:scaleX(0.907);">DIN18379</span>
<div class="b" style="left:743px;top:329.5px;width:93.5px;height:17.5px;background:#ffffff;border:1px solid #9c9c9c;box-sizing:border-box;border-radius:2px;"></div>
<span class="t" style="left:746px;transform-origin:0 50%;top:330.8px;font-size:12px;line-height:16px;color:#1a1a1a;-webkit-text-stroke:0.15px #1a1a1a;transform:scaleX(0.923);">Component name</span>
<div class="b" style="left:838.7px;top:329.5px;width:117.5px;height:17.5px;background:#ffffff;border:1px solid #9c9c9c;box-sizing:border-box;border-radius:2px;"></div>
<span class="t" style="left:841.7px;transform-origin:0 50%;top:330.8px;font-size:12px;line-height:16px;color:#1a1a1a;-webkit-text-stroke:0.15px #1a1a1a;transform:scaleX(0.924);">Insulation specification</span>
<div class="b" style="left:958.4000000000001px;top:329.5px;width:58px;height:17.5px;background:#ffffff;border:1px solid #9c9c9c;box-sizing:border-box;border-radius:2px;"></div>
<span class="t" style="left:961.4000000000001px;transform-origin:0 50%;top:330.8px;font-size:12px;line-height:16px;color:#1a1a1a;-webkit-text-stroke:0.15px #1a1a1a;transform:scaleX(0.917);">Dimension</span>
<div class="b" style="left:1018.6000000000001px;top:329.5px;width:89px;height:17.5px;background:#ffffff;border:1px solid #9c9c9c;box-sizing:border-box;border-radius:2px;"></div>
<span class="t" style="left:1021.6000000000001px;transform-origin:0 50%;top:330.8px;font-size:12px;line-height:16px;color:#1a1a1a;-webkit-text-stroke:0.15px #1a1a1a;transform:scaleX(0.936);">Volume flow rate</span>
<div class="b" style="left:1231.2px;top:327.5px;width:18.5px;height:21.1px;background:#fdfdfe;border:1px solid #e0e0e5;box-sizing:border-box;"></div>
<span class="t" style="left:940.3px;width:600px;text-align:center;transform-origin:50% 50%;top:331.8px;font-size:11px;line-height:14px;color:#1a1a1a;font-weight:bold;transform:scaleX(0.850);">...</span>
<div class="b" style="left:369.5px;top:348px;width:895px;height:1.5px;background:#868b96;"></div>
<div class="b" style="left:363px;top:349.5px;width:909px;height:13px;background:#f0eff1;"></div>
<div class="b" style="left:1249.7px;top:144px;width:16px;height:204px;background:#f3f2f5;"></div>
<svg class="b" style="left:1253px;top:168.5px;" width="10" height="7" viewBox="0 0 10 7"><path d="M1.800 5.600 5 2l3.200 3.600" stroke="#6a6a6e" stroke-width="1.100" fill="none"/></svg>
<svg class="b" style="left:1253px;top:337px;" width="10" height="7" viewBox="0 0 10 7"><path d="M1.800 1.400 5 5l3.200-3.600" stroke="#6a6a6e" stroke-width="1.100" fill="none"/></svg>
<div class="b" style="left:1256px;top:278px;width:3px;height:23px;background:#c2c2c6;border-radius:2px;"></div>
<div class="b" style="left:1271.5px;top:74px;width:1.5px;height:873.5px;background:#f9f9fa;"></div>
<div class="b" style="left:362px;top:363px;width:911px;height:1px;background:#b4b4b8;"></div>
<div class="b" style="left:362px;top:364px;width:911px;height:3px;background:#f8f8fa;"></div>
<div class="b" style="left:362px;top:367px;width:911px;height:1px;background:#c9c9cd;"></div>
<span class="t" style="left:369px;transform-origin:0 50%;top:380.0px;font-size:14px;line-height:18px;color:#1a1a1a;font-weight:bold;transform:scaleX(0.873);">Bill of quantities</span>
<svg class="b" style="left:374px;top:410px;" width="17" height="17" viewBox="0 0 17 17"><path d="M2.500 7.500A6 6 0 0 1 13 4.500" fill="none" stroke="#2f9e5f" stroke-width="2.400"/><path d="M14.500 1v5.500H9Z" fill="#2f9e5f"/><path d="M14.500 9.500A6 6 0 0 1 4 12.500" fill="none" stroke="#2f9e5f" stroke-width="2.400"/><path d="M2.500 16v-5.500H8Z" fill="#2f9e5f"/></svg>
<svg class="b" style="left:402px;top:410px;" width="18" height="18" viewBox="0 0 18 18"><path d="M1 1h14L9.500 8v7l-3-1.500V8Z" fill="#fdfdfd" stroke="#3a3a3a" stroke-width="1.200" stroke-linejoin="round"/><path d="M13 9l5 8.500H8Z" fill="#f2b02c"/><rect x="12.500" y="12" width="1.200" height="3" fill="#3a3a3a"/><rect x="12.500" y="15.600" width="1.200" height="1.100" fill="#3a3a3a"/></svg>
<div class="b" style="left:428px;top:408px;width:200px;height:21px;background:#f6f5f8;border-radius:3px;"></div>
<span class="t" style="left:433px;transform-origin:0 50%;top:411.0px;font-size:12px;line-height:16px;color:#2a2a2a;-webkit-text-stroke:0.15px #2a2a2a;transform:scaleX(0.917);">Position number (range)</span>
<svg class="b" style="left:1172px;top:411px;" width="16" height="15" viewBox="0 0 16 15"><rect x="1" y="0" width="15" height="2.200" fill="#3a3a3a"/><g fill="#1d7fc4"><rect x="0" y="4" width="13" height="1.800"/><rect x="0" y="7.300" width="13" height="1.800"/><rect x="0" y="10.600" width="13" height="1.800"/><rect x="0" y="13.800" width="13" height="1.200"/></g></svg>
<svg class="b" style="left:1197px;top:410px;" width="16" height="17" viewBox="0 0 16 17"><path d="M10 5V1H1v15h9v-4" fill="none" stroke="#3a3a3a" stroke-width="1.300"/><path d="M5 8.500h8M10 5l3.500 3.500L10 12" fill="none" stroke="#1d7fc4" stroke-width="1.900"/></svg>
<span class="t" style="left:1217px;transform-origin:0 50%;top:411.0px;font-size:12px;line-height:16px;color:#1a1a1a;-webkit-text-stroke:0.15px #1a1a1a;transform:scaleX(0.873);">Export...</span>
<div class="b" style="left:368px;top:438px;width:899px;height:500px;background:#ffffff;border:1.500px solid #8e939d;box-sizing:border-box;border-top-color:#5f646f;border-left-color:#6f747f;"></div>
<div class="b" style="left:370px;top:440px;width:879.700px;height:21px;background:linear-gradient(#ffffff,#f6f6fa);"></div>
<div class="b" style="left:370px;top:461px;width:879.7px;height:1px;background:#d5d5da;"></div>
<span class="t" style="left:393px;transform-origin:0 50%;top:443.0px;font-size:12px;line-height:16px;color:#1a1a1a;-webkit-text-stroke:0.15px #1a1a1a;transform:scaleX(0.857);">RefNo.</span>
<span class="t" style="left:434px;transform-origin:0 50%;top:443.0px;font-size:12px;line-height:16px;color:#1a1a1a;-webkit-text-stroke:0.15px #1a1a1a;transform:scaleX(0.935);">Short text</span>
<span class="t" style="left:1102px;transform-origin:0 50%;top:443.0px;font-size:12px;line-height:16px;color:#1a1a1a;-webkit-text-stroke:0.15px #1a1a1a;transform:scaleX(0.964);">Qty</span>
<span class="t" style="left:1175.5px;transform-origin:0 50%;top:443.0px;font-size:12px;line-height:16px;color:#1a1a1a;-webkit-text-stroke:0.15px #1a1a1a;transform:scaleX(0.987);">UoM</span>
<span class="t" style="left:1208.5px;transform-origin:0 50%;top:443.0px;font-size:12px;line-height:16px;color:#1a1a1a;-webkit-text-stroke:0.15px #1a1a1a;transform:scaleX(0.833);">CG</span>
<div class="b" style="left:370px;top:483.4px;width:879.7px;height:1px;background:#d5d5da;"></div>
<span class="t" style="left:390px;transform-origin:0 50%;top:464.8px;font-size:12px;line-height:16px;color:#1a1a1a;-webkit-text-stroke:0.15px #1a1a1a;transform:scaleX(0.900);">8.10</span>
<span class="t" style="left:431px;transform-origin:0 50%;top:464.8px;font-size:12px;line-height:16px;color:#1a1a1a;-webkit-text-stroke:0.15px #1a1a1a;transform:scaleX(0.928);">Insulation for Transition rectangular, 20 mm</span>
<span class="t" style="right:612px;transform-origin:100% 50%;top:464.8px;font-size:12px;line-height:16px;color:#1a1a1a;-webkit-text-stroke:0.15px #1a1a1a;transform:scaleX(0.900);">6,690</span>
<span class="t" style="left:1173px;transform-origin:0 50%;top:464.8px;font-size:12px;line-height:16px;color:#1a1a1a;-webkit-text-stroke:0.15px #1a1a1a;transform:scaleX(0.900);">m²</span>
<span class="t" style="left:1206px;transform-origin:0 50%;top:464.8px;font-size:12px;line-height:16px;color:#1a1a1a;-webkit-text-stroke:0.15px #1a1a1a;transform:scaleX(0.849);">431</span>
<div class="b" style="left:1077.3px;top:461.7px;width:18.8px;height:21.2px;background:#fdfdfe;border:1px solid #e0e0e5;box-sizing:border-box;"></div>
<span class="t" style="left:786.7px;width:600px;text-align:center;transform-origin:50% 50%;top:465.5px;font-size:11px;line-height:14px;color:#1a1a1a;font-weight:bold;transform:scaleX(0.850);">...</span>
<div class="b" style="left:370px;top:506.5px;width:879.7px;height:1px;background:#d5d5da;"></div>
<span class="t" style="left:390px;transform-origin:0 50%;top:487.9px;font-size:12px;line-height:16px;color:#1a1a1a;-webkit-text-stroke:0.15px #1a1a1a;transform:scaleX(0.900);">8.11</span>
<span class="t" style="left:431px;transform-origin:0 50%;top:487.9px;font-size:12px;line-height:16px;color:#1a1a1a;-webkit-text-stroke:0.15px #1a1a1a;transform:scaleX(0.928);">Insulation for Transition rectangular, 30 mm</span>
<span class="t" style="right:612px;transform-origin:100% 50%;top:487.9px;font-size:12px;line-height:16px;color:#1a1a1a;-webkit-text-stroke:0.15px #1a1a1a;transform:scaleX(0.900);">6,690</span>
<span class="t" style="left:1173px;transform-origin:0 50%;top:487.9px;font-size:12px;line-height:16px;color:#1a1a1a;-webkit-text-stroke:0.15px #1a1a1a;transform:scaleX(0.900);">m²</span>
<span class="t" style="left:1206px;transform-origin:0 50%;top:487.9px;font-size:12px;line-height:16px;color:#1a1a1a;-webkit-text-stroke:0.15px #1a1a1a;transform:scaleX(0.849);">431</span>
<div class="b" style="left:1077.3px;top:484.9px;width:18.8px;height:21.2px;background:#fdfdfe;border:1px solid #e0e0e5;box-sizing:border-box;"></div>
<span class="t" style="left:786.7px;width:600px;text-align:center;transform-origin:50% 50%;top:488.6px;font-size:11px;line-height:14px;color:#1a1a1a;font-weight:bold;transform:scaleX(0.850);">...</span>
<div class="b" style="left:370px;top:529.7px;width:879.7px;height:1px;background:#d5d5da;"></div>
<span class="t" style="left:390px;transform-origin:0 50%;top:511.1px;font-size:12px;line-height:16px;color:#1a1a1a;-webkit-text-stroke:0.15px #1a1a1a;transform:scaleX(0.900);">8.12</span>
<span class="t" style="left:431px;transform-origin:0 50%;top:511.1px;font-size:12px;line-height:16px;color:#1a1a1a;-webkit-text-stroke:0.15px #1a1a1a;transform:scaleX(0.928);">Insulation for Transition round, 20 mm</span>
<span class="t" style="right:612px;transform-origin:100% 50%;top:511.1px;font-size:12px;line-height:16px;color:#1a1a1a;-webkit-text-stroke:0.15px #1a1a1a;transform:scaleX(0.900);">2,000</span>
<span class="t" style="left:1173px;transform-origin:0 50%;top:511.1px;font-size:12px;line-height:16px;color:#1a1a1a;-webkit-text-stroke:0.15px #1a1a1a;transform:scaleX(0.900);">m²</span>
<span class="t" style="left:1206px;transform-origin:0 50%;top:511.1px;font-size:12px;line-height:16px;color:#1a1a1a;-webkit-text-stroke:0.15px #1a1a1a;transform:scaleX(0.849);">431</span>
<div class="b" style="left:1077.3px;top:508.0px;width:18.8px;height:21.2px;background:#fdfdfe;border:1px solid #e0e0e5;box-sizing:border-box;"></div>
<span class="t" style="left:786.7px;width:600px;text-align:center;transform-origin:50% 50%;top:511.8px;font-size:11px;line-height:14px;color:#1a1a1a;font-weight:bold;transform:scaleX(0.850);">...</span>
<div class="b" style="left:370px;top:552.8px;width:879.7px;height:1px;background:#d5d5da;"></div>
<span class="t" style="left:390px;transform-origin:0 50%;top:534.3px;font-size:12px;line-height:16px;color:#1a1a1a;-webkit-text-stroke:0.15px #1a1a1a;transform:scaleX(0.900);">8.13</span>
<span class="t" style="left:431px;transform-origin:0 50%;top:534.3px;font-size:12px;line-height:16px;color:#1a1a1a;-webkit-text-stroke:0.15px #1a1a1a;transform:scaleX(0.928);">Insulation for Transition round, 30 mm</span>
<span class="t" style="right:612px;transform-origin:100% 50%;top:534.3px;font-size:12px;line-height:16px;color:#1a1a1a;-webkit-text-stroke:0.15px #1a1a1a;transform:scaleX(0.900);">2,000</span>
<span class="t" style="left:1173px;transform-origin:0 50%;top:534.3px;font-size:12px;line-height:16px;color:#1a1a1a;-webkit-text-stroke:0.15px #1a1a1a;transform:scaleX(0.900);">m²</span>
<span class="t" style="left:1206px;transform-origin:0 50%;top:534.3px;font-size:12px;line-height:16px;color:#1a1a1a;-webkit-text-stroke:0.15px #1a1a1a;transform:scaleX(0.849);">431</span>
<div class="b" style="left:1077.3px;top:531.2px;width:18.8px;height:21.2px;background:#fdfdfe;border:1px solid #e0e0e5;box-sizing:border-box;"></div>
<span class="t" style="left:786.7px;width:600px;text-align:center;transform-origin:50% 50%;top:535.0px;font-size:11px;line-height:14px;color:#1a1a1a;font-weight:bold;transform:scaleX(0.850);">...</span>
<div class="b" style="left:370px;top:576.0px;width:879.7px;height:1px;background:#d5d5da;"></div>
<span class="t" style="left:390px;transform-origin:0 50%;top:556.4px;font-size:13.5px;line-height:18px;color:#1a1a1a;font-weight:bold;transform:scaleX(0.880);">9</span>
<span class="t" style="left:431px;transform-origin:0 50%;top:556.9px;font-size:13.5px;line-height:18px;color:#1a1a1a;font-weight:bold;transform:scaleX(0.908);">Fire dampers</span>
<span class="t" style="left:1206px;transform-origin:0 50%;top:556.4px;font-size:13.5px;line-height:18px;color:#1a1a1a;font-weight:bold;transform:scaleX(0.888);">431</span>
<div class="b" style="left:1077.3px;top:554.3px;width:18.8px;height:21.2px;background:#fdfdfe;border:1px solid #e0e0e5;box-sizing:border-box;"></div>
<span class="t" style="left:786.7px;width:600px;text-align:center;transform-origin:50% 50%;top:558.1px;font-size:11px;line-height:14px;color:#1a1a1a;font-weight:bold;transform:scaleX(0.850);">...</span>
<div class="b" style="left:370px;top:599.2px;width:879.7px;height:1px;background:#d5d5da;"></div>
<span class="t" style="left:390px;transform-origin:0 50%;top:580.6px;font-size:12px;line-height:16px;color:#1a1a1a;-webkit-text-stroke:0.15px #1a1a1a;transform:scaleX(0.900);">9.1</span>
<span class="t" style="left:431px;transform-origin:0 50%;top:580.6px;font-size:12px;line-height:16px;color:#1a1a1a;-webkit-text-stroke:0.15px #1a1a1a;transform:scaleX(0.928);">Fire damper, 350/450-350</span>
<span class="t" style="right:612px;transform-origin:100% 50%;top:580.6px;font-size:12px;line-height:16px;color:#1a1a1a;-webkit-text-stroke:0.15px #1a1a1a;transform:scaleX(0.900);">1</span>
<span class="t" style="left:1173px;transform-origin:0 50%;top:580.6px;font-size:12px;line-height:16px;color:#1a1a1a;-webkit-text-stroke:0.15px #1a1a1a;transform:scaleX(0.900);">Pc</span>
<span class="t" style="left:1206px;transform-origin:0 50%;top:580.6px;font-size:12px;line-height:16px;color:#1a1a1a;-webkit-text-stroke:0.15px #1a1a1a;transform:scaleX(0.849);">431</span>
<div class="b" style="left:1077.3px;top:577.5px;width:18.8px;height:21.2px;background:#fdfdfe;border:1px solid #e0e0e5;box-sizing:border-box;"></div>
<span class="t" style="left:786.7px;width:600px;text-align:center;transform-origin:50% 50%;top:581.3px;font-size:11px;line-height:14px;color:#1a1a1a;font-weight:bold;transform:scaleX(0.850);">...</span>
<div class="b" style="left:370px;top:622.3px;width:879.7px;height:1px;background:#d5d5da;"></div>
<span class="t" style="left:390px;transform-origin:0 50%;top:603.7px;font-size:12px;line-height:16px;color:#1a1a1a;-webkit-text-stroke:0.15px #1a1a1a;transform:scaleX(0.900);">9.2</span>
<span class="t" style="left:431px;transform-origin:0 50%;top:603.7px;font-size:12px;line-height:16px;color:#1a1a1a;-webkit-text-stroke:0.15px #1a1a1a;transform:scaleX(0.928);">Fire damper, 450/600-450</span>
<span class="t" style="right:612px;transform-origin:100% 50%;top:603.7px;font-size:12px;line-height:16px;color:#1a1a1a;-webkit-text-stroke:0.15px #1a1a1a;transform:scaleX(0.900);">1</span>
<span class="t" style="left:1173px;transform-origin:0 50%;top:603.7px;font-size:12px;line-height:16px;color:#1a1a1a;-webkit-text-stroke:0.15px #1a1a1a;transform:scaleX(0.900);">Pc</span>
<span class="t" style="left:1206px;transform-origin:0 50%;top:603.7px;font-size:12px;line-height:16px;color:#1a1a1a;-webkit-text-stroke:0.15px #1a1a1a;transform:scaleX(0.849);">431</span>
<div class="b" style="left:1077.3px;top:600.7px;width:18.8px;height:21.2px;background:#fdfdfe;border:1px solid #e0e0e5;box-sizing:border-box;"></div>
<span class="t" style="left:786.7px;width:600px;text-align:center;transform-origin:50% 50%;top:604.4px;font-size:11px;line-height:14px;color:#1a1a1a;font-weight:bold;transform:scaleX(0.850);">...</span>
<div class="b" style="left:370px;top:645.5px;width:879.7px;height:1px;background:#d5d5da;"></div>
<span class="t" style="left:390px;transform-origin:0 50%;top:626.9px;font-size:12px;line-height:16px;color:#1a1a1a;-webkit-text-stroke:0.15px #1a1a1a;transform:scaleX(0.900);">9.3</span>
<span class="t" style="left:431px;transform-origin:0 50%;top:626.9px;font-size:12px;line-height:16px;color:#1a1a1a;-webkit-text-stroke:0.15px #1a1a1a;transform:scaleX(0.928);">Fire damper, 600/250-600</span>
<span class="t" style="right:612px;transform-origin:100% 50%;top:626.9px;font-size:12px;line-height:16px;color:#1a1a1a;-webkit-text-stroke:0.15px #1a1a1a;transform:scaleX(0.900);">1</span>
<span class="t" style="left:1173px;transform-origin:0 50%;top:626.9px;font-size:12px;line-height:16px;color:#1a1a1a;-webkit-text-stroke:0.15px #1a1a1a;transform:scaleX(0.900);">Pc</span>
<span class="t" style="left:1206px;transform-origin:0 50%;top:626.9px;font-size:12px;line-height:16px;color:#1a1a1a;-webkit-text-stroke:0.15px #1a1a1a;transform:scaleX(0.849);">431</span>
<div class="b" style="left:1077.3px;top:623.8px;width:18.8px;height:21.2px;background:#fdfdfe;border:1px solid #e0e0e5;box-sizing:border-box;"></div>
<span class="t" style="left:786.7px;width:600px;text-align:center;transform-origin:50% 50%;top:627.6px;font-size:11px;line-height:14px;color:#1a1a1a;font-weight:bold;transform:scaleX(0.850);">...</span>
<div class="b" style="left:370px;top:668.6px;width:879.7px;height:1px;background:#d5d5da;"></div>
<span class="t" style="left:390px;transform-origin:0 50%;top:650.1px;font-size:12px;line-height:16px;color:#1a1a1a;-webkit-text-stroke:0.15px #1a1a1a;transform:scaleX(0.900);">9.4</span>
<span class="t" style="left:431px;transform-origin:0 50%;top:650.1px;font-size:12px;line-height:16px;color:#1a1a1a;-webkit-text-stroke:0.15px #1a1a1a;transform:scaleX(0.928);">Fire damper, 600/450-600</span>
<span class="t" style="right:612px;transform-origin:100% 50%;top:650.1px;font-size:12px;line-height:16px;color:#1a1a1a;-webkit-text-stroke:0.15px #1a1a1a;transform:scaleX(0.900);">1</span>
<span class="t" style="left:1173px;transform-origin:0 50%;top:650.1px;font-size:12px;line-height:16px;color:#1a1a1a;-webkit-text-stroke:0.15px #1a1a1a;transform:scaleX(0.900);">Pc</span>
<span class="t" style="left:1206px;transform-origin:0 50%;top:650.1px;font-size:12px;line-height:16px;color:#1a1a1a;-webkit-text-stroke:0.15px #1a1a1a;transform:scaleX(0.849);">431</span>
<div class="b" style="left:1077.3px;top:647.0px;width:18.8px;height:21.2px;background:#fdfdfe;border:1px solid #e0e0e5;box-sizing:border-box;"></div>
<span class="t" style="left:786.7px;width:600px;text-align:center;transform-origin:50% 50%;top:650.8px;font-size:11px;line-height:14px;color:#1a1a1a;font-weight:bold;transform:scaleX(0.850);">...</span>
<div class="b" style="left:370px;top:691.8px;width:879.7px;height:1px;background:#d5d5da;"></div>
<span class="t" style="left:390px;transform-origin:0 50%;top:672.2px;font-size:13.5px;line-height:18px;color:#1a1a1a;font-weight:bold;transform:scaleX(0.880);">10</span>
<span class="t" style="left:431px;transform-origin:0 50%;top:672.7px;font-size:13.5px;line-height:18px;color:#1a1a1a;font-weight:bold;transform:scaleX(0.929);">Air outlets</span>
<span class="t" style="left:1206px;transform-origin:0 50%;top:672.2px;font-size:13.5px;line-height:18px;color:#1a1a1a;font-weight:bold;transform:scaleX(0.888);">431</span>
<div class="b" style="left:1077.3px;top:670.1px;width:18.8px;height:21.2px;background:#fdfdfe;border:1px solid #e0e0e5;box-sizing:border-box;"></div>
<span class="t" style="left:786.7px;width:600px;text-align:center;transform-origin:50% 50%;top:673.9px;font-size:11px;line-height:14px;color:#1a1a1a;font-weight:bold;transform:scaleX(0.850);">...</span>
<div class="b" style="left:370px;top:715.0px;width:879.7px;height:1px;background:#d5d5da;"></div>
<span class="t" style="left:390px;transform-origin:0 50%;top:696.4px;font-size:12px;line-height:16px;color:#1a1a1a;-webkit-text-stroke:0.15px #1a1a1a;transform:scaleX(0.900);">10.1</span>
<span class="t" style="left:431px;transform-origin:0 50%;top:696.4px;font-size:12px;line-height:16px;color:#1a1a1a;-webkit-text-stroke:0.15px #1a1a1a;transform:scaleX(0.928);">Air valve, ø100</span>
<span class="t" style="right:612px;transform-origin:100% 50%;top:696.4px;font-size:12px;line-height:16px;color:#1a1a1a;-webkit-text-stroke:0.15px #1a1a1a;transform:scaleX(0.900);">60</span>
<span class="t" style="left:1173px;transform-origin:0 50%;top:696.4px;font-size:12px;line-height:16px;color:#1a1a1a;-webkit-text-stroke:0.15px #1a1a1a;transform:scaleX(0.900);">Pc</span>
<span class="t" style="left:1206px;transform-origin:0 50%;top:696.4px;font-size:12px;line-height:16px;color:#1a1a1a;-webkit-text-stroke:0.15px #1a1a1a;transform:scaleX(0.849);">431</span>
<div class="b" style="left:1077.3px;top:693.3px;width:18.8px;height:21.2px;background:#fdfdfe;border:1px solid #e0e0e5;box-sizing:border-box;"></div>
<span class="t" style="left:786.7px;width:600px;text-align:center;transform-origin:50% 50%;top:697.1px;font-size:11px;line-height:14px;color:#1a1a1a;font-weight:bold;transform:scaleX(0.850);">...</span>
<div class="b" style="left:370px;top:738.1px;width:879.7px;height:1px;background:#d5d5da;"></div>
<span class="t" style="left:390px;transform-origin:0 50%;top:719.5px;font-size:12px;line-height:16px;color:#1a1a1a;-webkit-text-stroke:0.15px #1a1a1a;transform:scaleX(0.900);">10.2</span>
<span class="t" style="left:431px;transform-origin:0 50%;top:719.5px;font-size:12px;line-height:16px;color:#1a1a1a;-webkit-text-stroke:0.15px #1a1a1a;transform:scaleX(0.928);">Air valve, ø125</span>
<span class="t" style="right:612px;transform-origin:100% 50%;top:719.5px;font-size:12px;line-height:16px;color:#1a1a1a;-webkit-text-stroke:0.15px #1a1a1a;transform:scaleX(0.900);">9</span>
<span class="t" style="left:1173px;transform-origin:0 50%;top:719.5px;font-size:12px;line-height:16px;color:#1a1a1a;-webkit-text-stroke:0.15px #1a1a1a;transform:scaleX(0.900);">Pc</span>
<span class="t" style="left:1206px;transform-origin:0 50%;top:719.5px;font-size:12px;line-height:16px;color:#1a1a1a;-webkit-text-stroke:0.15px #1a1a1a;transform:scaleX(0.849);">431</span>
<div class="b" style="left:1077.3px;top:716.5px;width:18.8px;height:21.2px;background:#fdfdfe;border:1px solid #e0e0e5;box-sizing:border-box;"></div>
<span class="t" style="left:786.7px;width:600px;text-align:center;transform-origin:50% 50%;top:720.2px;font-size:11px;line-height:14px;color:#1a1a1a;font-weight:bold;transform:scaleX(0.850);">...</span>
<div class="b" style="left:370px;top:761.3px;width:879.7px;height:1px;background:#d5d5da;"></div>
<span class="t" style="left:390px;transform-origin:0 50%;top:742.7px;font-size:12px;line-height:16px;color:#1a1a1a;-webkit-text-stroke:0.15px #1a1a1a;transform:scaleX(0.900);">10.3</span>
<span class="t" style="left:431px;transform-origin:0 50%;top:742.7px;font-size:12px;line-height:16px;color:#1a1a1a;-webkit-text-stroke:0.15px #1a1a1a;transform:scaleX(0.928);">Slot diffuser, ø100</span>
<span class="t" style="right:612px;transform-origin:100% 50%;top:742.7px;font-size:12px;line-height:16px;color:#1a1a1a;-webkit-text-stroke:0.15px #1a1a1a;transform:scaleX(0.900);">50</span>
<span class="t" style="left:1173px;transform-origin:0 50%;top:742.7px;font-size:12px;line-height:16px;color:#1a1a1a;-webkit-text-stroke:0.15px #1a1a1a;transform:scaleX(0.900);">Pc</span>
<span class="t" style="left:1206px;transform-origin:0 50%;top:742.7px;font-size:12px;line-height:16px;color:#1a1a1a;-webkit-text-stroke:0.15px #1a1a1a;transform:scaleX(0.849);">431</span>
<div class="b" style="left:1077.3px;top:739.6px;width:18.8px;height:21.2px;background:#fdfdfe;border:1px solid #e0e0e5;box-sizing:border-box;"></div>
<span class="t" style="left:786.7px;width:600px;text-align:center;transform-origin:50% 50%;top:743.4px;font-size:11px;line-height:14px;color:#1a1a1a;font-weight:bold;transform:scaleX(0.850);">...</span>
<div class="b" style="left:370px;top:784.4px;width:879.7px;height:1px;background:#d5d5da;"></div>
<span class="t" style="left:390px;transform-origin:0 50%;top:765.9px;font-size:12px;line-height:16px;color:#1a1a1a;-webkit-text-stroke:0.15px #1a1a1a;transform:scaleX(0.900);">10.4</span>
<span class="t" style="left:431px;transform-origin:0 50%;top:765.9px;font-size:12px;line-height:16px;color:#1a1a1a;-webkit-text-stroke:0.15px #1a1a1a;transform:scaleX(0.928);">Slot diffuser, ø125</span>
<span class="t" style="right:612px;transform-origin:100% 50%;top:765.9px;font-size:12px;line-height:16px;color:#1a1a1a;-webkit-text-stroke:0.15px #1a1a1a;transform:scaleX(0.900);">18</span>
<span class="t" style="left:1173px;transform-origin:0 50%;top:765.9px;font-size:12px;line-height:16px;color:#1a1a1a;-webkit-text-stroke:0.15px #1a1a1a;transform:scaleX(0.900);">Pc</span>
<span class="t" style="left:1206px;transform-origin:0 50%;top:765.9px;font-size:12px;line-height:16px;color:#1a1a1a;-webkit-text-stroke:0.15px #1a1a1a;transform:scaleX(0.849);">431</span>
<div class="b" style="left:1077.3px;top:762.8px;width:18.8px;height:21.2px;background:#fdfdfe;border:1px solid #e0e0e5;box-sizing:border-box;"></div>
<span class="t" style="left:786.7px;width:600px;text-align:center;transform-origin:50% 50%;top:766.6px;font-size:11px;line-height:14px;color:#1a1a1a;font-weight:bold;transform:scaleX(0.850);">...</span>
<div class="b" style="left:370px;top:807.6px;width:879.7px;height:1px;background:#d5d5da;"></div>
<span class="t" style="left:390px;transform-origin:0 50%;top:789.0px;font-size:12px;line-height:16px;color:#1a1a1a;-webkit-text-stroke:0.15px #1a1a1a;transform:scaleX(0.900);">10.5</span>
<span class="t" style="left:431px;transform-origin:0 50%;top:789.0px;font-size:12px;line-height:16px;color:#1a1a1a;-webkit-text-stroke:0.15px #1a1a1a;transform:scaleX(0.928);">Slot diffuser, ø160</span>
<span class="t" style="right:612px;transform-origin:100% 50%;top:789.0px;font-size:12px;line-height:16px;color:#1a1a1a;-webkit-text-stroke:0.15px #1a1a1a;transform:scaleX(0.900);">6</span>
<span class="t" style="left:1173px;transform-origin:0 50%;top:789.0px;font-size:12px;line-height:16px;color:#1a1a1a;-webkit-text-stroke:0.15px #1a1a1a;transform:scaleX(0.900);">Pc</span>
<span class="t" style="left:1206px;transform-origin:0 50%;top:789.0px;font-size:12px;line-height:16px;color:#1a1a1a;-webkit-text-stroke:0.15px #1a1a1a;transform:scaleX(0.849);">431</span>
<div class="b" style="left:1077.3px;top:785.9px;width:18.8px;height:21.2px;background:#fdfdfe;border:1px solid #e0e0e5;box-sizing:border-box;"></div>
<span class="t" style="left:786.7px;width:600px;text-align:center;transform-origin:50% 50%;top:789.7px;font-size:11px;line-height:14px;color:#1a1a1a;font-weight:bold;transform:scaleX(0.850);">...</span>
<div class="b" style="left:370px;top:830.8px;width:879.7px;height:1px;background:#d5d5da;"></div>
<span class="t" style="left:390px;transform-origin:0 50%;top:811.2px;font-size:13.5px;line-height:18px;color:#1a1a1a;font-weight:bold;transform:scaleX(0.880);">11</span>
<span class="t" style="left:431px;transform-origin:0 50%;top:811.7px;font-size:13.5px;line-height:18px;color:#1a1a1a;font-weight:bold;transform:scaleX(0.904);">Ventilation systems</span>
<span class="t" style="left:1206px;transform-origin:0 50%;top:811.2px;font-size:13.5px;line-height:18px;color:#1a1a1a;font-weight:bold;transform:scaleX(0.888);">431</span>
<div class="b" style="left:1077.3px;top:809.1px;width:18.8px;height:21.2px;background:#fdfdfe;border:1px solid #e0e0e5;box-sizing:border-box;"></div>
<span class="t" style="left:786.7px;width:600px;text-align:center;transform-origin:50% 50%;top:812.9px;font-size:11px;line-height:14px;color:#1a1a1a;font-weight:bold;transform:scaleX(0.850);">...</span>
<div class="b" style="left:370px;top:853.9px;width:879.7px;height:1px;background:#d5d5da;"></div>
<span class="t" style="left:390px;transform-origin:0 50%;top:835.3px;font-size:12px;line-height:16px;color:#1a1a1a;-webkit-text-stroke:0.15px #1a1a1a;transform:scaleX(0.900);">11.1</span>
<span class="t" style="left:431px;transform-origin:0 50%;top:835.3px;font-size:12px;line-height:16px;color:#1a1a1a;-webkit-text-stroke:0.15px #1a1a1a;transform:scaleX(0.928);">Ventilation device</span>
<span class="t" style="right:612px;transform-origin:100% 50%;top:835.3px;font-size:12px;line-height:16px;color:#1a1a1a;-webkit-text-stroke:0.15px #1a1a1a;transform:scaleX(0.900);">1</span>
<span class="t" style="left:1173px;transform-origin:0 50%;top:835.3px;font-size:12px;line-height:16px;color:#1a1a1a;-webkit-text-stroke:0.15px #1a1a1a;transform:scaleX(0.900);">Pc</span>
<span class="t" style="left:1206px;transform-origin:0 50%;top:835.3px;font-size:12px;line-height:16px;color:#1a1a1a;-webkit-text-stroke:0.15px #1a1a1a;transform:scaleX(0.849);">431</span>
<div class="b" style="left:1077.3px;top:832.3px;width:18.8px;height:21.2px;background:#fdfdfe;border:1px solid #e0e0e5;box-sizing:border-box;"></div>
<span class="t" style="left:786.7px;width:600px;text-align:center;transform-origin:50% 50%;top:836.0px;font-size:11px;line-height:14px;color:#1a1a1a;font-weight:bold;transform:scaleX(0.850);">...</span>
<div class="b" style="left:370px;top:877.1px;width:879.7px;height:1px;background:#d5d5da;"></div>
<span class="t" style="left:390px;transform-origin:0 50%;top:857.5px;font-size:13.5px;line-height:18px;color:#1a1a1a;font-weight:bold;transform:scaleX(0.880);">12</span>
<span class="t" style="left:431px;transform-origin:0 50%;top:858.0px;font-size:13.5px;line-height:18px;color:#1a1a1a;font-weight:bold;transform:scaleX(0.931);">Air grille</span>
<span class="t" style="left:1206px;transform-origin:0 50%;top:857.5px;font-size:13.5px;line-height:18px;color:#1a1a1a;font-weight:bold;transform:scaleX(0.888);">431</span>
<div class="b" style="left:1077.3px;top:855.4px;width:18.8px;height:21.2px;background:#fdfdfe;border:1px solid #e0e0e5;box-sizing:border-box;"></div>
<span class="t" style="left:786.7px;width:600px;text-align:center;transform-origin:50% 50%;top:859.2px;font-size:11px;line-height:14px;color:#1a1a1a;font-weight:bold;transform:scaleX(0.850);">...</span>
<div class="b" style="left:370px;top:900.2px;width:879.7px;height:1px;background:#d5d5da;"></div>
<span class="t" style="left:390px;transform-origin:0 50%;top:881.7px;font-size:12px;line-height:16px;color:#1a1a1a;-webkit-text-stroke:0.15px #1a1a1a;transform:scaleX(0.900);">12.1</span>
<span class="t" style="left:431px;transform-origin:0 50%;top:881.7px;font-size:12px;line-height:16px;color:#1a1a1a;-webkit-text-stroke:0.15px #1a1a1a;transform:scaleX(0.928);">Duct grille, 325/125</span>
<span class="t" style="right:612px;transform-origin:100% 50%;top:881.7px;font-size:12px;line-height:16px;color:#1a1a1a;-webkit-text-stroke:0.15px #1a1a1a;transform:scaleX(0.900);">2</span>
<span class="t" style="left:1173px;transform-origin:0 50%;top:881.7px;font-size:12px;line-height:16px;color:#1a1a1a;-webkit-text-stroke:0.15px #1a1a1a;transform:scaleX(0.900);">Pc</span>
<span class="t" style="left:1206px;transform-origin:0 50%;top:881.7px;font-size:12px;line-height:16px;color:#1a1a1a;-webkit-text-stroke:0.15px #1a1a1a;transform:scaleX(0.849);">431</span>
<div class="b" style="left:1077.3px;top:878.6px;width:18.8px;height:21.2px;background:#fdfdfe;border:1px solid #e0e0e5;box-sizing:border-box;"></div>
<span class="t" style="left:786.7px;width:600px;text-align:center;transform-origin:50% 50%;top:882.4px;font-size:11px;line-height:14px;color:#1a1a1a;font-weight:bold;transform:scaleX(0.850);">...</span>
<div class="b" style="left:370px;top:900.7px;width:879.7px;height:23.2px;background:#f0f0f4;"></div>
<div class="b" style="left:370px;top:923.4px;width:879.7px;height:1px;background:#d5d5da;"></div>
<span class="t" style="left:390px;transform-origin:0 50%;top:903.8px;font-size:13.5px;line-height:18px;color:#1a1a1a;font-weight:bold;transform:scaleX(0.880);">13</span>
<span class="t" style="left:431px;transform-origin:0 50%;top:904.3px;font-size:13.5px;line-height:18px;color:#1a1a1a;font-weight:bold;transform:scaleX(0.908);">Sound absorber</span>
<span class="t" style="left:1206px;transform-origin:0 50%;top:903.8px;font-size:13.5px;line-height:18px;color:#1a1a1a;font-weight:bold;transform:scaleX(0.888);">431</span>
<div class="b" style="left:1077.3px;top:901.7px;width:18.8px;height:21.2px;background:#fdfdfe;border:1px solid #e0e0e5;box-sizing:border-box;"></div>
<span class="t" style="left:786.7px;width:600px;text-align:center;transform-origin:50% 50%;top:905.5px;font-size:11px;line-height:14px;color:#1a1a1a;font-weight:bold;transform:scaleX(0.850);">...</span>
<div class="b" style="left:370px;top:946.6px;width:879.7px;height:1px;background:#d5d5da;"></div>
<span class="t" style="left:390px;transform-origin:0 50%;top:926.5px;font-size:12px;line-height:16px;color:#1a1a1a;-webkit-text-stroke:0.15px #1a1a1a;transform:scaleX(0.900);">13.1</span>
<span class="t" style="left:431px;transform-origin:0 50%;top:926.5px;font-size:12px;line-height:16px;color:#1a1a1a;-webkit-text-stroke:0.15px #1a1a1a;transform:scaleX(0.928);">Sound absorber, telephony absorber, circuit 200/200, 200/200</span>
<span class="t" style="right:612px;transform-origin:100% 50%;top:926.5px;font-size:12px;line-height:16px;color:#1a1a1a;-webkit-text-stroke:0.15px #1a1a1a;transform:scaleX(0.900);">2</span>
<span class="t" style="left:1173px;transform-origin:0 50%;top:926.5px;font-size:12px;line-height:16px;color:#1a1a1a;-webkit-text-stroke:0.15px #1a1a1a;transform:scaleX(0.900);">Pc</span>
<span class="t" style="left:1206px;transform-origin:0 50%;top:926.5px;font-size:12px;line-height:16px;color:#1a1a1a;-webkit-text-stroke:0.15px #1a1a1a;transform:scaleX(0.849);">431</span>
<div class="b" style="left:1077.3px;top:924.9px;width:18.8px;height:21.2px;background:#fdfdfe;border:1px solid #e0e0e5;box-sizing:border-box;"></div>
<span class="t" style="left:786.7px;width:600px;text-align:center;transform-origin:50% 50%;top:927.2px;font-size:11px;line-height:14px;color:#1a1a1a;font-weight:bold;transform:scaleX(0.850);">...</span>
<div class="b" style="left:387.5px;top:440px;width:1px;height:496px;background:#d9d9de;"></div>
<div class="b" style="left:429px;top:440px;width:1px;height:496px;background:#d9d9de;"></div>
<div class="b" style="left:1170.4px;top:440px;width:1px;height:496px;background:#d9d9de;"></div>
<div class="b" style="left:1203.3px;top:440px;width:1px;height:496px;background:#d9d9de;"></div>
<div class="b" style="left:1249.7px;top:461.5px;width:16px;height:469.5px;background:#f3f2f5;"></div>
<svg class="b" style="left:1253px;top:464.5px;" width="10" height="7" viewBox="0 0 10 7"><path d="M1.800 5.600 5 2l3.200 3.600" stroke="#8a8a8e" stroke-width="1.200" fill="none"/></svg>
<svg class="b" style="left:1253px;top:920px;" width="10" height="7" viewBox="0 0 10 7"><path d="M1.800 1.400 5 5l3.200-3.600" stroke="#6a6a6e" stroke-width="1.100" fill="none"/></svg>
<div class="b" style="left:1256px;top:811px;width:3px;height:65px;background:#c2c2c6;border-radius:2px;"></div>
<div class="b" style="left:369.5px;top:931px;width:896px;height:1.5px;background:#8e939d;"></div>
<div class="b" style="left:363px;top:932.5px;width:909px;height:15px;background:#f0eff1;"></div>
<div class="b" style="left:547px;top:336px;width:541px;height:361.500px;background:#f0eff1;border-radius:7px;box-shadow:0 0 0 1px rgba(160,160,168,.8),0 1px 3px rgba(0,0,0,.10);overflow:hidden;"><div style="height:28px;background:#fff;"></div></div>
<svg class="b" style="left:555px;top:342px;" width="14" height="14" viewBox="0 0 14 14"><path d="M0 2.700 4.300 0 12.800 5v3.800l-4 2.700V5.200L6.500 4 4.300 5.200V14L.3 11.500Z" fill="#1f4b4d"/></svg>
<span class="t" style="left:574.5px;transform-origin:0 50%;top:342.0px;font-size:12px;line-height:16px;color:#1a1a1a;-webkit-text-stroke:0.15px #1a1a1a;transform:scaleX(0.936);">Configure short text</span>
<span class="t" style="left:725px;width:600px;text-align:center;transform-origin:50% 50%;top:341.5px;font-size:12px;line-height:16px;color:#1a1a1a;font-weight:bold;transform:scaleX(0.900);">?</span>
<svg class="b" style="left:1061px;top:344px;" width="11" height="11" viewBox="0 0 11 11"><path d="M.5 .5l10 10M10.5 .5l-10 10" stroke="#1a1a1a" stroke-width="1.200"/></svg>
<span class="t" style="left:557px;transform-origin:0 50%;top:374.0px;font-size:14px;line-height:18px;color:#1a1a1a;font-weight:bold;transform:scaleX(0.866);">Sound absorber</span>
<svg class="b" style="left:1036px;top:376px;" width="13" height="13" viewBox="0 0 13 13"><path d="M4.700 0h3.600v4.700H13v3.600H8.300V13H4.700V8.300H0V4.700h4.700Z" fill="#1b8545"/></svg>
<svg class="b" style="left:1061px;top:377px;" width="12" height="12" viewBox="0 0 12 12"><path d="M2.400 0 6 3.600 9.600 0 12 2.400 8.400 6 12 9.600 9.600 12 6 8.400 2.400 12 0 9.600 3.600 6 0 2.400Z" fill="#e9a0a8"/></svg>
<div class="b" style="left:556.5px;top:406.5px;width:522.5px;height:252px;background:#f5f5f7;border:1.500px solid #6d727c;box-sizing:border-box;"></div>
<div class="b" style="left:563.5px;top:429.5px;width:513.5px;height:70.4px;background:#ffffff;"></div>
<div class="b" style="left:558px;top:408px;width:519.5px;height:21px;background:linear-gradient(#ffffff,#f6f6fa);"></div>
<div class="b" style="left:558px;top:429px;width:519.5px;height:1px;background:#d5d5da;"></div>
<span class="t" style="left:568px;transform-origin:0 50%;top:411.0px;font-size:12px;line-height:16px;color:#1a1a1a;-webkit-text-stroke:0.15px #1a1a1a;transform:scaleX(0.893);">Parameter</span>
<span class="t" style="left:722px;transform-origin:0 50%;top:411.0px;font-size:12px;line-height:16px;color:#1a1a1a;-webkit-text-stroke:0.15px #1a1a1a;transform:scaleX(0.880);">Prefix</span>
<span class="t" style="left:799px;transform-origin:0 50%;top:411.0px;font-size:12px;line-height:16px;color:#1a1a1a;-webkit-text-stroke:0.15px #1a1a1a;transform:scaleX(0.884);">Alias</span>
<span class="t" style="left:954px;transform-origin:0 50%;top:411.0px;font-size:12px;line-height:16px;color:#1a1a1a;-webkit-text-stroke:0.15px #1a1a1a;transform:scaleX(0.906);">Suffix</span>
<span class="t" style="left:1031px;transform-origin:0 50%;top:411.0px;font-size:12px;line-height:16px;color:#1a1a1a;-webkit-text-stroke:0.15px #1a1a1a;transform:scaleX(0.940);">Optional</span>
<div class="b" style="left:563.5px;top:446.6px;width:513.5px;height:1px;background:#d9d9de;"></div>
<div class="b" style="left:566px;top:429.5px;width:147.800px;height:17.6px;overflow:hidden;">
<span class="t" style="left:0px;transform-origin:0 50%;top:1.1px;font-size:12px;line-height:16px;color:#1a1a1a;-webkit-text-stroke:0.15px #1a1a1a;transform:scaleX(0.858);">LIN_QTO_COMPONENT_NAME</span>
</div>
<span class="t" style="left:797px;transform-origin:0 50%;top:430.6px;font-size:12px;line-height:16px;color:#1a1a1a;-webkit-text-stroke:0.15px #1a1a1a;transform:scaleX(0.923);">Component name</span>
<div class="b" style="left:1045px;top:431.7px;width:13px;height:13px;background:#ffffff;border:1px solid #5a5a5a;box-sizing:border-box;border-radius:2px;"></div>
<div class="b" style="left:563.5px;top:446.4px;width:513px;height:18.6px;background:#8dd0d7;"></div>
<div class="b" style="left:563.5px;top:464.2px;width:513.5px;height:1px;background:#d9d9de;"></div>
<span class="t" style="left:566px;transform-origin:0 50%;top:448.2px;font-size:12px;line-height:16px;color:#1a1a1a;-webkit-text-stroke:0.15px #1a1a1a;transform:scaleX(0.836);">LIN_QTO_HAS_INSULATION</span>
<span class="t" style="left:797px;transform-origin:0 50%;top:448.2px;font-size:12px;line-height:16px;color:#1a1a1a;-webkit-text-stroke:0.15px #1a1a1a;transform:scaleX(0.928);">Insulation specification</span>
<div class="b" style="left:1045px;top:449.3px;width:13px;height:13px;background:#ffffff;border:1px solid #5a5a5a;box-sizing:border-box;border-radius:2px;"></div>
<svg class="b" style="left:1045px;top:449.3px;" width="13" height="13" viewBox="0 0 13 13"><path d="M3 6.500 5.700 9.500 10.200 3.500" stroke="#1a1a1a" stroke-width="1.300" fill="none"/></svg>
<div class="b" style="left:563.5px;top:481.8px;width:513.5px;height:1px;background:#d9d9de;"></div>
<span class="t" style="left:566px;transform-origin:0 50%;top:465.8px;font-size:12px;line-height:16px;color:#1a1a1a;-webkit-text-stroke:0.15px #1a1a1a;transform:scaleX(0.814);">Size</span>
<span class="t" style="left:797px;transform-origin:0 50%;top:465.8px;font-size:12px;line-height:16px;color:#1a1a1a;-webkit-text-stroke:0.15px #1a1a1a;transform:scaleX(0.917);">Dimension</span>
<div class="b" style="left:1045px;top:466.9px;width:13px;height:13px;background:#ffffff;border:1px solid #5a5a5a;box-sizing:border-box;border-radius:2px;"></div>
<div class="b" style="left:563.5px;top:499.4px;width:513.5px;height:1px;background:#d9d9de;"></div>
<span class="t" style="left:566px;transform-origin:0 50%;top:483.4px;font-size:12px;line-height:16px;color:#1a1a1a;-webkit-text-stroke:0.15px #1a1a1a;transform:scaleX(0.818);">LIN_ARTICLE_NUMBER</span>
<span class="t" style="left:720px;transform-origin:0 50%;top:483.4px;font-size:12px;line-height:16px;color:#1a1a1a;-webkit-text-stroke:0.15px #1a1a1a;transform:scaleX(0.944);">Model:</span>
<span class="t" style="left:797px;transform-origin:0 50%;top:483.4px;font-size:12px;line-height:16px;color:#1a1a1a;-webkit-text-stroke:0.15px #1a1a1a;transform:scaleX(0.935);">Item number</span>
<div class="b" style="left:1045px;top:484.5px;width:13px;height:13px;background:#ffffff;border:1px solid #5a5a5a;box-sizing:border-box;border-radius:2px;"></div>
<svg class="b" style="left:1045px;top:484.5px;" width="13" height="13" viewBox="0 0 13 13"><path d="M3 6.500 5.700 9.500 10.200 3.500" stroke="#1a1a1a" stroke-width="1.300" fill="none"/></svg>
<div class="b" style="left:563px;top:408px;width:1px;height:91.9px;background:#dcdce0;"></div>
<div class="b" style="left:717px;top:408px;width:1px;height:91.9px;background:#dcdce0;"></div>
<div class="b" style="left:794px;top:408px;width:1px;height:91.9px;background:#dcdce0;"></div>
<div class="b" style="left:949px;top:408px;width:1px;height:91.9px;background:#dcdce0;"></div>
<div class="b" style="left:1025.5px;top:408px;width:1px;height:91.9px;background:#dcdce0;"></div>
<svg class="b" style="left:558px;top:672px;" width="15" height="14" viewBox="0 0 15 14"><path d="M0 4.700 7 .3v8.800Z" fill="#1b7fd0"/><path d="M6 4.700h4.300a3.900 3.900 0 0 1 0 7.800H.5" fill="none" stroke="#1b7fd0" stroke-width="1.900"/></svg>
<span class="t" style="left:578px;transform-origin:0 50%;top:672.0px;font-size:12px;line-height:16px;color:#1a1a1a;-webkit-text-stroke:0.15px #1a1a1a;transform:scaleX(0.914);">Default value</span>
<div class="b" style="left:926px;top:668.5px;width:73.8px;height:20.4px;background:#f2f1f4;border:2px solid #1a1a1a;box-sizing:border-box;"></div>
<span class="t" style="left:663px;width:600px;text-align:center;transform-origin:50% 50%;top:671.0px;font-size:12px;line-height:16px;color:#1a1a1a;-webkit-text-stroke:0.15px #1a1a1a;transform:scaleX(0.900);">OK</span>
<div class="b" style="left:1005px;top:668.5px;width:74px;height:20.4px;background:#f2f1f4;border:1.300px solid #2a2a2a;box-sizing:border-box;"></div>
<span class="t" style="left:741.5px;width:600px;text-align:center;transform-origin:50% 50%;top:671.0px;font-size:12px;line-height:16px;color:#1a1a1a;-webkit-text-stroke:0.15px #1a1a1a;transform:scaleX(0.883);">Cancel</span>
<svg class="b" style="left:1076px;top:685px;" width="10" height="10" viewBox="0 0 10 10"><g fill="#b9b9be"><rect x="7" y="1" width="1.500" height="1.500"/><rect x="4" y="4" width="1.500" height="1.500"/><rect x="7" y="4" width="1.500" height="1.500"/><rect x="1" y="7" width="1.500" height="1.500"/><rect x="4" y="7" width="1.500" height="1.500"/><rect x="7" y="7" width="1.500" height="1.500"/></g></svg>
<svg class="b" style="left:792px;top:545px;" width="16" height="23" viewBox="0 0 16 23"><path d="M1.500 1.500v16.500l4-3.700 3 6.700 2.800-1.300-3-6.500h5.500Z" fill="#ffffff" stroke="#111" stroke-width="1.300" stroke-linejoin="round"/></svg>
<div class="b" style="left:0px;top:947.5px;width:1778px;height:52.5px;background:#ffffff;"></div>
<svg class="b" style="left:4px;top:952px;" width="44" height="44" viewBox="0 0 44 44"><circle cx="22" cy="21.800" r="20.900" fill="#1c4655"/><path d="M13.600 11v22l20.700-11Z" fill="#fff"/></svg>
<span class="t" style="left:66px;transform-origin:0 50%;top:967.5px;font-size:9.5px;line-height:12px;color:#1a1a1a;-webkit-text-stroke:0.15px #1a1a1a;transform:scaleX(0.992);">02:46 / 06:18</span>
<div class="b" style="left:143px;top:971.7px;width:1362px;height:5px;background:#d9d9d9;border-radius:2px;"></div>
<div class="b" style="left:143px;top:971.7px;width:600px;height:5px;background:#14323f;border-radius:2px;"></div>
<svg class="b" style="left:735.6px;top:967.6px;" width="14" height="14" viewBox="0 0 14 14"><circle cx="7" cy="7" r="6.500" fill="#14323f"/></svg>
<svg class="b" style="left:1604px;top:962px;" width="23" height="23" viewBox="0 0 23 23"><g fill="none" stroke="#1a1a1a" stroke-width="1.500" stroke-linejoin="round"><path d="M9.800 1.500h3.400l.6 2.700 1.900.8 2.300-1.500 2.400 2.400-1.500 2.300.8 1.900 2.700.6v3.400l-2.700.6-.8 1.900 1.500 2.300-2.400 2.400-2.300-1.500-1.900.8-.6 2.700H9.800l-.6-2.700-1.900-.8L5 20.300 2.600 17.900l1.500-2.300-.8-1.900-2.700-.6V9.700l2.700-.6.8-1.900L2.600 4.900 5 2.500l2.300 1.500 1.900-.8Z" transform="translate(1.300 1.300) scale(.89)"/><circle cx="11.500" cy="11.500" r="3.600"/></g></svg>
<svg class="b" style="left:1647px;top:965px;" width="32" height="18" viewBox="0 0 32 18"><g fill="none" stroke-linejoin="round"><path d="M2 2.500v13l8-6.500Z" stroke="#b5b5b5" stroke-width="1.400"/><path d="M11 2.500v13l8-6.500Z" stroke="#1a1a1a" stroke-width="1.500"/><path d="M20 2.500v13l9.500-6.500Z" stroke="#1a1a1a" stroke-width="1.500"/></g></svg>
<svg class="b" style="left:1694px;top:961px;" width="28" height="26" viewBox="0 0 28 26"><g fill="none" stroke="#1a1a1a" stroke-width="1.600" stroke-linejoin="round"><path d="M4 9.500h5.500L17 4v18l-7.500-5.500H4Z"/><path d="M6 9.500v7"/></g><path d="M2 2l22 22M24 2 2 24" stroke="#d2454f" stroke-width="1.500"/></svg>
<svg class="b" style="left:1745px;top:963px;" width="21" height="21" viewBox="0 0 21 21"><g fill="none" stroke="#1a1a1a" stroke-width="1.600"><path d="M19.500 1.500 12.500 8.500M12.500 3v5.500H18"/><path d="M1.500 19.500 8.500 12.500M8.500 18v-5.500H3"/></g></svg>
</body></html>
